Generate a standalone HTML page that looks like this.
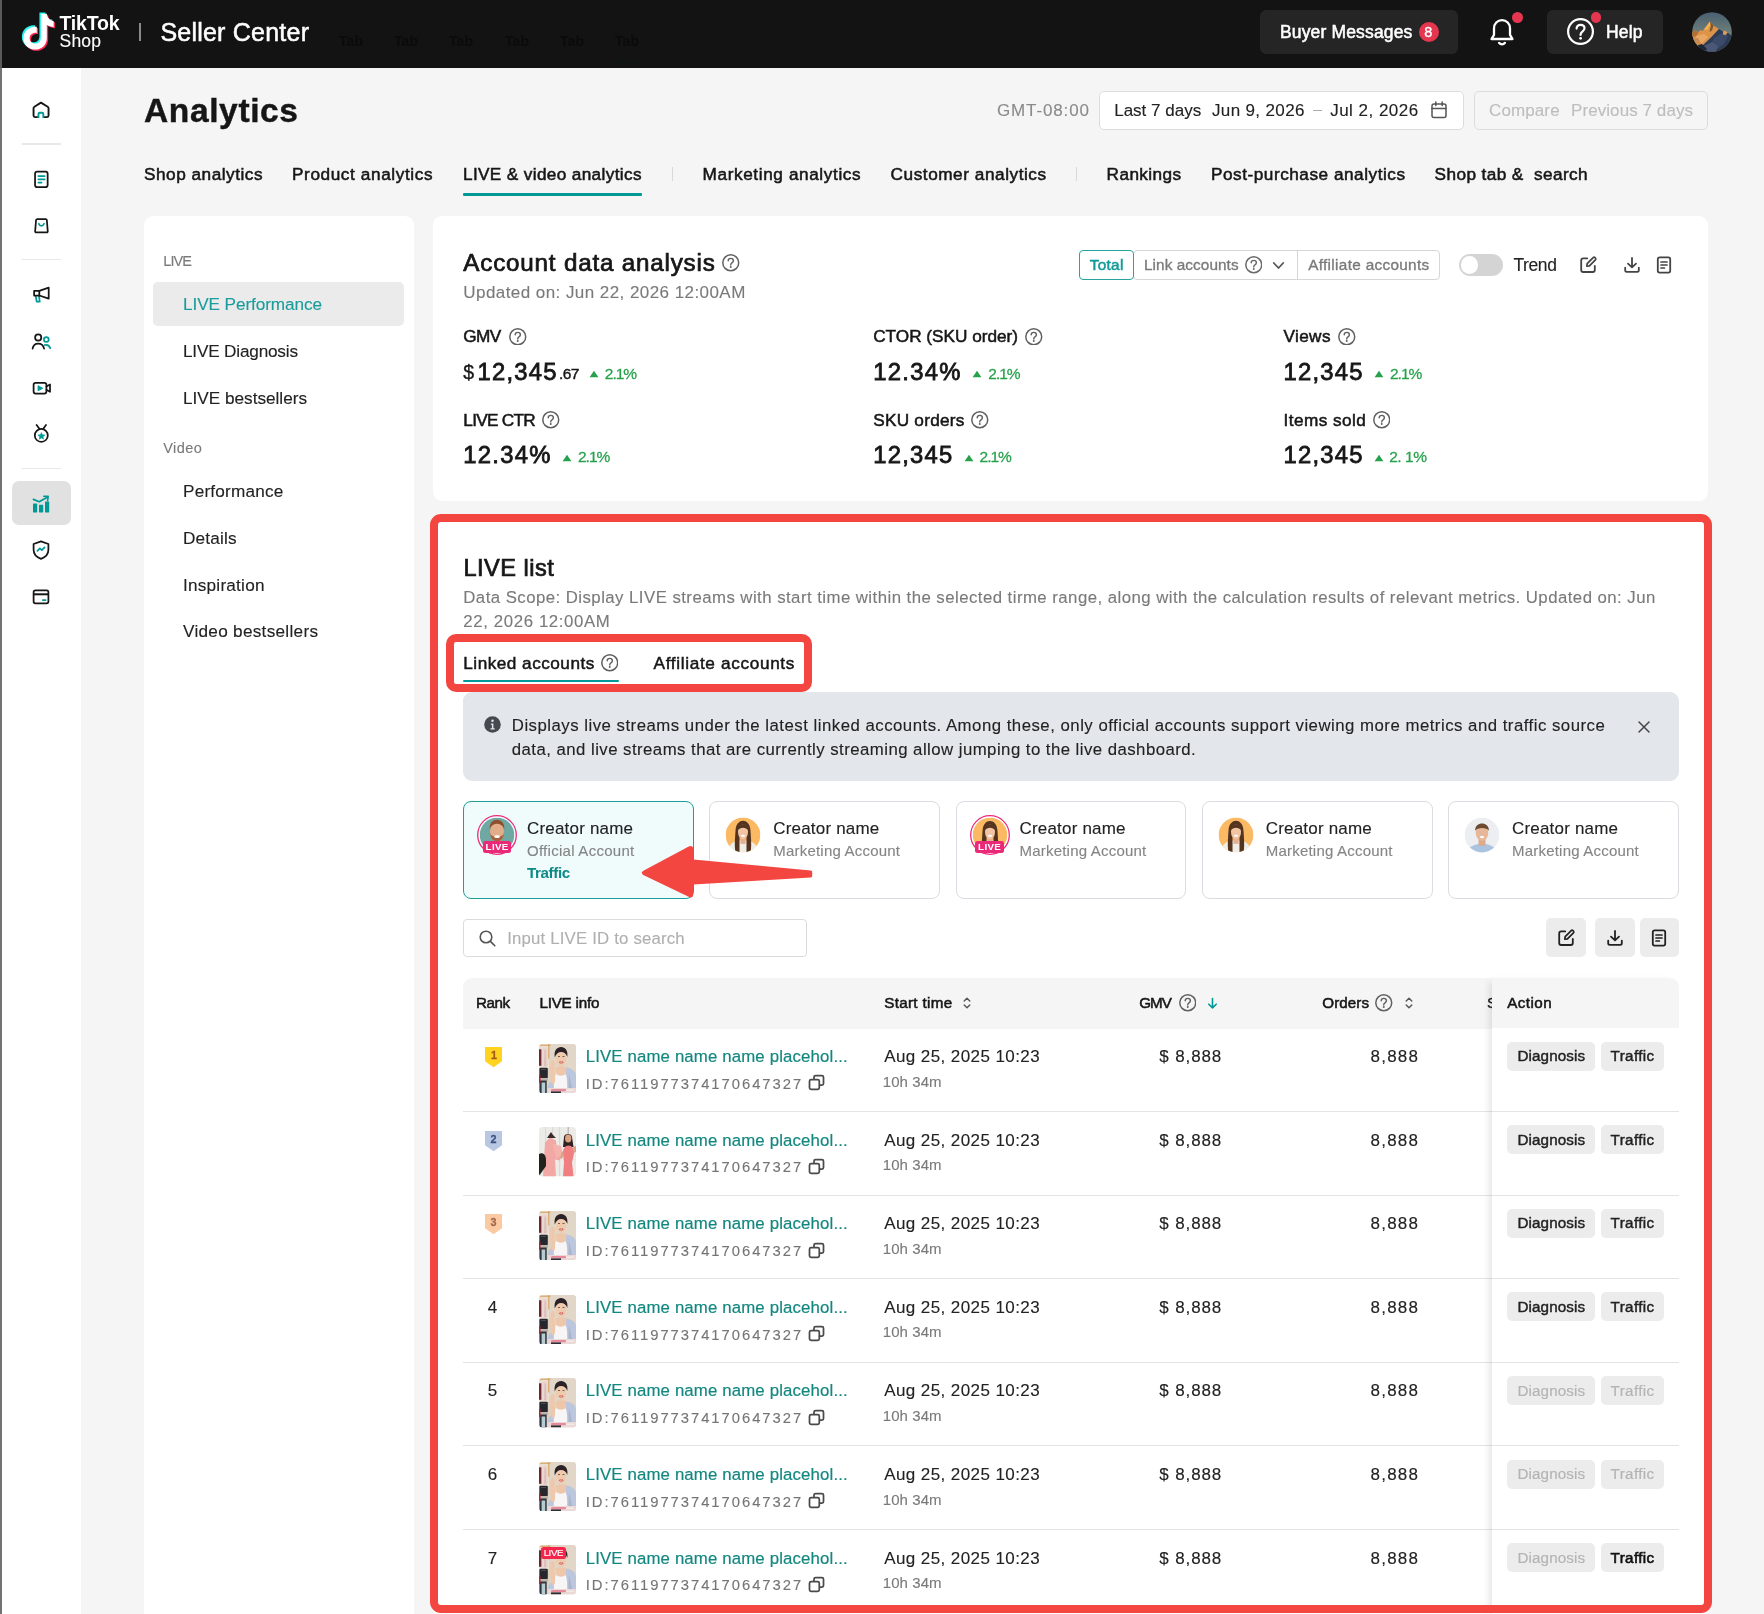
<!DOCTYPE html>
<html><head><meta charset="utf-8"><title>Analytics - Seller Center</title>
<style>
html,body{margin:0;padding:0;}
body{width:1764px;height:1614px;overflow:hidden;background:#f5f5f5;font-family:"Liberation Sans",sans-serif;position:relative;}
#root{position:absolute;left:0;top:0;width:1764px;height:1614px;will-change:transform;}
.a{position:absolute;box-sizing:border-box;display:block;}
.t{position:absolute;white-space:nowrap;line-height:1;}
</style></head>
<body>
<div id="root">
<div class="a" style="left:0px;top:0px;width:1764px;height:68px;background:#131313;"></div>
<svg class="a" style="left:16.6px;top:11.4px;" width="42.5" height="46.75" viewBox="0 0 40 44" fill="none"><path d="M22.5 2.5h5.6c.3 3.6 2.6 6.3 6.4 6.8v5.7c-2.4 0-4.6-.7-6.4-2v12.3c0 6.4-5 11-11 11S6 31.8 6 25.6c0-6.7 5.600-11.6 12.600-10.800v5.900c-3.600-.800-6.700 1.500-6.700 4.900 0 2.900 2.300 5.100 5.200 5.100s5.400-2.200 5.400-5.600z" fill="#25f4ee" transform="translate(-1.4,-1.2)"/><path d="M22.5 2.5h5.6c.3 3.6 2.6 6.3 6.4 6.8v5.7c-2.4 0-4.6-.7-6.4-2v12.3c0 6.4-5 11-11 11S6 31.8 6 25.6c0-6.7 5.600-11.6 12.600-10.800v5.900c-3.600-.800-6.700 1.500-6.700 4.900 0 2.900 2.300 5.100 5.200 5.100s5.400-2.200 5.400-5.600z" fill="#fe2c55" transform="translate(1.2,1.2)"/><path d="M22.5 2.5h5.6c.3 3.6 2.6 6.3 6.4 6.8v5.7c-2.4 0-4.6-.7-6.4-2v12.3c0 6.4-5 11-11 11S6 31.8 6 25.6c0-6.7 5.600-11.6 12.600-10.800v5.900c-3.600-.800-6.700 1.500-6.700 4.900 0 2.900 2.300 5.100 5.200 5.100s5.400-2.200 5.400-5.600z" fill="#fff"/></svg>
<span class="t" style="left:59.5px;top:14px;font-size:19.5px;color:#fff;font-weight:700;letter-spacing:-0.209px;">TikTok</span>
<span class="t" style="left:59.5px;top:33px;font-size:17.5px;color:#fff;-webkit-text-stroke:0.12px #fff;letter-spacing:0.208px;">Shop</span>
<div class="a" style="left:139px;top:23px;width:1.5px;height:18px;background:#8a8a8a;"></div>
<span class="t" style="left:160.4px;top:20px;font-size:25px;color:#fff;-webkit-text-stroke:0.53px #fff;letter-spacing:0.224px;">Seller Center</span>
<span class="t" style="left:339px;top:34px;font-size:14px;color:#0b0b0b;font-weight:700;letter-spacing:0.070px;">Tab</span>
<span class="t" style="left:394px;top:34px;font-size:14px;color:#0b0b0b;font-weight:700;letter-spacing:0.070px;">Tab</span>
<span class="t" style="left:449px;top:34px;font-size:14px;color:#0b0b0b;font-weight:700;letter-spacing:0.070px;">Tab</span>
<span class="t" style="left:505px;top:34px;font-size:14px;color:#0b0b0b;font-weight:700;letter-spacing:0.070px;">Tab</span>
<span class="t" style="left:560px;top:34px;font-size:14px;color:#0b0b0b;font-weight:700;letter-spacing:0.070px;">Tab</span>
<span class="t" style="left:615px;top:34px;font-size:14px;color:#0b0b0b;font-weight:700;letter-spacing:0.070px;">Tab</span>
<div class="a" style="left:615px;top:61px;width:24px;height:2px;background:#0e1615;"></div>
<div class="a" style="left:1260px;top:9.5px;width:198px;height:44px;background:#252525;border-radius:6px;"></div>
<span class="t" style="left:1280px;top:24px;font-size:17.5px;color:#fff;-webkit-text-stroke:0.53px #fff;letter-spacing:0.150px;">Buyer Messages</span>
<div class="a" style="left:1418.5px;top:21.5px;width:20px;height:20px;background:#e5364f;border-radius:10px;"></div>
<span class="t" style="left:1424.2px;top:25px;font-size:14.5px;color:#fff;-webkit-text-stroke:0.35px #fff;">8</span>
<svg class="a" style="left:1488px;top:17px;" width="28" height="30" viewBox="0 0 28 30" fill="none"><path d="M14 3.2c-4.600 0-8 3.600-8 8.200v6.400l-2.500 4.200h21L22 17.800v-6.400c0-4.600-3.400-8.200-8-8.200z" stroke="#fff" stroke-width="2.300" stroke-linejoin="round"/><path d="M11 25.800c.8 1 1.800 1.500 3 1.500s2.200-.5 3-1.500" stroke="#fff" stroke-width="2.200" stroke-linecap="round"/></svg>
<div class="a" style="left:1512px;top:12px;width:10.5px;height:10.5px;background:#e5364f;border-radius:6px;"></div>
<div class="a" style="left:1546.5px;top:9.5px;width:116.5px;height:44px;background:#252525;border-radius:6px;"></div>
<svg class="a" style="left:1566px;top:17px;" width="29" height="29" viewBox="0 0 29 29" fill="none"><circle cx="14.5" cy="14.5" r="12.4" stroke="#fff" stroke-width="2.200"/><path d="M10.600 11.600c0-2.200 1.700-3.800 4-3.800s3.900 1.500 3.900 3.500c0 1.700-1 2.500-2.100 3.300-1.100.8-1.800 1.400-1.800 2.800v.5" stroke="#fff" stroke-width="2.200" stroke-linecap="round"/><circle cx="14.600" cy="21.300" r="1.400" fill="#fff"/></svg>
<div class="a" style="left:1590.5px;top:12px;width:10.5px;height:10.5px;background:#e5364f;border-radius:6px;"></div>
<span class="t" style="left:1606px;top:24px;font-size:17.5px;color:#fff;-webkit-text-stroke:0.53px #fff;letter-spacing:0.167px;">Help</span>
<svg class="a" style="left:1692.4px;top:11.600px" width="40" height="40" viewBox="0 0 40 40"><defs><clipPath id="avc"><circle cx="20" cy="20" r="19.800"/></clipPath><linearGradient id="sky" x1="0" y1="0" x2="0" y2="1"><stop offset="0" stop-color="#495f70"/><stop offset=".55" stop-color="#6f8079"/><stop offset="1" stop-color="#6f8079"/></linearGradient></defs><g clip-path="url(#avc)"><rect width="40" height="40" fill="url(#sky)"/><path d="M18 9.400L10.500 19 8.500 18 6.500 20 2.500 18.500 0 21V33L9 35 19 25.500 27 17 21.500 13.500z" fill="#dd9449"/><path d="M18 9.400L12 17.500 15 18 18.500 13z" fill="#f3b34d"/><path d="M18 9.400L21.500 13.500 20 18.500 17.500 20 18.800 14z" fill="#7d5630"/><path d="M0 21l2.500-2.500 4 1.500-2 4-4.500 1z" fill="#b06f35"/><path d="M4 24l8-2 4 3-6 6-6-1z" fill="#e9a763"/><path d="M0 26l6 0 3 5-9 2z" fill="#c98a55"/><path d="M27 17l3 2 2.500 1.200 3.500.800 4 3V40H6l3-5 10-9.500z" fill="#2e3b55"/><path d="M22 26l8-5 6 3-4 8-8 6-8 1z" fill="#3b4a68"/><path d="M12 34l8-4 6 4-2 6H10z" fill="#4a5876"/><path d="M31 19.500l2-1 2.500 2-1.500 2.500-3-.500z" fill="#d99a5a"/><path d="M6 33l4-1 5 5-3 3H5z" fill="#1d2435"/></g></svg>
<div class="a" style="left:2px;top:68px;width:79px;height:1546px;background:#fff;"></div>
<div class="a" style="left:0px;top:0px;width:2.3px;height:68px;background:#5a5a5a;"></div>
<div class="a" style="left:0px;top:68px;width:2.3px;height:1546px;background:#727272;"></div>
<svg class="a" style="left:30.0px;top:99.3px;" width="22" height="22" viewBox="0 0 22 22" fill="none"><path d="M8.450 18.100H5.050c-.850 0-1.500-.650-1.500-1.500V9.300c0-.700.300-1.200.900-1.600L10.950 3.600l6.700 4.100c.600.400.900.900.900 1.600v7.300c0 .850-.650 1.500-1.500 1.500h-3.700" stroke="#161616" stroke-width="1.900" stroke-linejoin="round"/><path d="M8.450 19.050v-3.900c0-.800.650-1.450 1.450-1.450h2c.800 0 1.450.650 1.450 1.450v3.900" stroke="#009995" stroke-width="1.900" stroke-linecap="butt"/></svg>
<div class="a" style="left:22px;top:143px;width:39px;height:1.5px;background:#e6e8ec;"></div>
<svg class="a" style="left:30.0px;top:168.3px;" width="22" height="22" viewBox="0 0 22 22" fill="none"><rect x="5.050" y="3.550" width="12.600" height="15.600" rx="2.200" stroke="#161616" stroke-width="1.75" stroke-linecap="round" stroke-linejoin="round"/><path d="M8.400 8.100h6.300M8.400 11.300h6.300M8.400 14.600h3.200" stroke="#009995" stroke-width="1.75" stroke-linecap="round" stroke-linejoin="round"/></svg>
<svg class="a" style="left:30.0px;top:214.6px;" width="22" height="22" viewBox="0 0 22 22" fill="none"><path d="M7.350 4.200h8.400c.600 0 1 .400 1.100 1l.900 11.100c.050.600-.400 1.100-1 1.100H6.150c-.600 0-1.050-.500-1-1.100l.900-11.100c.100-.600.600-1 1.300-1z" stroke="#161616" stroke-width="1.75" stroke-linecap="round" stroke-linejoin="round"/><path d="M8.800 8.700c.500 1.400 1.400 2.100 2.600 2.100s2.100-.700 2.600-2.100" stroke="#009995" stroke-width="1.75" stroke-linecap="round" stroke-linejoin="round"/></svg>
<div class="a" style="left:22px;top:258.5px;width:39px;height:1.5px;background:#e6e8ec;"></div>
<svg class="a" style="left:30.0px;top:283.5px;" width="22" height="22" viewBox="0 0 22 22" fill="none"><path d="M5.800 12.500l.900 5.200h3l-.600-5.200" stroke="#009995" stroke-width="1.75" stroke-linecap="round" stroke-linejoin="round"/><path d="M4.100 6.900h5.200L18.700 3.600v11L9.300 11.500H4.100z" stroke="#161616" stroke-width="1.75" stroke-linecap="round" stroke-linejoin="round"/><path d="M9.300 6.900v4.600" stroke="#161616" stroke-width="1.75" stroke-linecap="round" stroke-linejoin="round"/></svg>
<svg class="a" style="left:30.0px;top:330.0px;" width="22" height="22" viewBox="0 0 22 22" fill="none"><circle cx="8.200" cy="7.400" r="3.100" stroke="#161616" stroke-width="1.75" stroke-linecap="round" stroke-linejoin="round"/><path d="M2.600 18.600c.600-3.400 2.800-5 5.600-5s5.200 1.600 5.900 5" stroke="#161616" stroke-width="1.75" stroke-linecap="round" stroke-linejoin="round"/><circle cx="16.300" cy="9.400" r="2.400" stroke="#009995" stroke-width="1.75" stroke-linecap="round" stroke-linejoin="round"/><path d="M14.600 15c2.800-.500 4.900.800 5.600 3.200" stroke="#009995" stroke-width="1.75" stroke-linecap="round" stroke-linejoin="round"/></svg>
<svg class="a" style="left:30.5px;top:376.5px;" width="22" height="22" viewBox="0 0 22 22" fill="none"><rect x="2.600" y="5.800" width="12.800" height="10.700" rx="2" stroke="#161616" stroke-width="1.75" stroke-linecap="round" stroke-linejoin="round"/><path d="M15.400 9.500l3.600-2v7.300l-3.600-2" stroke="#161616" stroke-width="1.75" stroke-linecap="round" stroke-linejoin="round"/><path d="M7 8.700l4.800 2.550-4.800 2.550z" fill="#009995" stroke="#009995" stroke-width=".8" stroke-linejoin="round"/></svg>
<svg class="a" style="left:30.0px;top:423.3px;" width="22" height="22" viewBox="0 0 22 22" fill="none"><circle cx="11.300" cy="12.400" r="6.500" stroke="#161616" stroke-width="1.75" stroke-linecap="round" stroke-linejoin="round"/><path d="M6.600 1.900l3 4M16 1.900l-2.900 4" stroke="#161616" stroke-width="1.75" stroke-linecap="round" stroke-linejoin="round"/><path d="M11.40 9.50L12.43 11.78L14.92 12.06L13.06 13.74L13.57 16.19L11.40 14.95L9.23 16.19L9.74 13.74L7.88 12.06L10.37 11.78z" fill="#009995" stroke="#009995" stroke-width=".5" stroke-linejoin="round"/></svg>
<div class="a" style="left:22px;top:467.5px;width:39px;height:1.5px;background:#e6e8ec;"></div>
<div class="a" style="left:12px;top:481px;width:59px;height:44px;background:#e1e1e2;border-radius:7px;"></div>
<svg class="a" style="left:30.0px;top:492.5px;" width="22" height="22" viewBox="0 0 22 22" fill="none"><rect x="3" y="10.600" width="4.200" height="8.800" rx=".6" fill="#009995"/><rect x="9" y="11.800" width="4.200" height="7.600" rx=".6" fill="#009995"/><rect x="15" y="8.600" width="4.200" height="10.800" rx=".6" fill="#009995"/><path d="M3.400 6.400l5.800 2.400 8-4.600" stroke="#009995" stroke-width="1.700" stroke-linecap="round" stroke-linejoin="round"/><path d="M13.800 3.200l4.400.2-.6 4.200" stroke="#009995" stroke-width="1.600" stroke-linecap="round" stroke-linejoin="round"/></svg>
<svg class="a" style="left:30.0px;top:539.2px;" width="22" height="22" viewBox="0 0 22 22" fill="none"><path d="M11 2.400l7.400 2.600v5.800c0 4.400-2.800 7.400-7.400 9-4.600-1.600-7.400-4.600-7.400-9V5z" stroke="#161616" stroke-width="1.75" stroke-linecap="round" stroke-linejoin="round"/><path d="M7.400 11.800l2.400-2.400 2 1.800 2.800-2.800" stroke="#009995" stroke-width="1.75" stroke-linecap="round" stroke-linejoin="round"/></svg>
<svg class="a" style="left:30.0px;top:586.0px;" width="22" height="22" viewBox="0 0 22 22" fill="none"><rect x="3.600" y="4.400" width="14.800" height="13" rx="1.800" stroke="#161616" stroke-width="1.75" stroke-linecap="round" stroke-linejoin="round"/><path d="M3.600 8.300h14.800" stroke="#161616" stroke-width="2"/><path d="M12.800 14.100h2.800" stroke="#009995" stroke-width="1.75" stroke-linecap="round" stroke-linejoin="round"/></svg>
<span class="t" style="left:144px;top:94px;font-size:33.5px;color:#161616;font-weight:700;-webkit-text-stroke:0.44px #161616;letter-spacing:0.631px;">Analytics</span>
<span class="t" style="left:997px;top:102px;font-size:17px;color:#8a8a8a;-webkit-text-stroke:0.12px #8a8a8a;letter-spacing:0.869px;">GMT-08:00</span>
<div class="a" style="left:1099px;top:90.5px;width:364.5px;height:39px;background:#fff;border:1.5px solid #dcdcdc;border-radius:5px;"></div>
<span class="t" style="left:1114.2px;top:102px;font-size:17px;color:#222;-webkit-text-stroke:0.12px #222;letter-spacing:0.005px;">Last 7 days</span>
<span class="t" style="left:1212px;top:102px;font-size:17px;color:#222;-webkit-text-stroke:0.12px #222;letter-spacing:0.354px;">Jun 9, 2026</span>
<div class="a" style="left:1313px;top:110px;width:9px;height:1.3px;background:#aaa;"></div>
<span class="t" style="left:1330.2px;top:102px;font-size:17px;color:#222;-webkit-text-stroke:0.12px #222;letter-spacing:0.481px;">Jul 2, 2026</span>
<svg class="a" style="left:1430px;top:100px;" width="18" height="20" viewBox="0 0 18 20" fill="none"><rect x="2" y="4" width="14" height="13.600" rx="2" stroke="#555" stroke-width="1.500"/><path d="M2 8.600h14M5.800 2v3.600M12.200 2v3.600" stroke="#555" stroke-width="1.500" stroke-linecap="round"/></svg>
<div class="a" style="left:1474px;top:90.5px;width:234px;height:39px;background:#f5f5f5;border:1.5px solid #dcdcdc;border-radius:5px;"></div>
<span class="t" style="left:1489px;top:102px;font-size:17px;color:#bdbdbd;-webkit-text-stroke:0.12px #bdbdbd;letter-spacing:0.113px;">Compare</span>
<span class="t" style="left:1571px;top:102px;font-size:17px;color:#bdbdbd;-webkit-text-stroke:0.12px #bdbdbd;letter-spacing:0.075px;">Previous 7 days</span>
<span class="t" style="left:144px;top:166px;font-size:17.2px;color:#161616;-webkit-text-stroke:0.53px #161616;letter-spacing:0.516px;white-space:pre;">Shop analytics</span>
<span class="t" style="left:292px;top:166px;font-size:17.2px;color:#161616;-webkit-text-stroke:0.53px #161616;letter-spacing:0.601px;white-space:pre;">Product analytics</span>
<span class="t" style="left:463px;top:166px;font-size:17.2px;color:#161616;-webkit-text-stroke:0.53px #161616;letter-spacing:0.356px;white-space:pre;">LIVE &amp; video analytics</span>
<span class="t" style="left:702.6px;top:166px;font-size:17.2px;color:#161616;-webkit-text-stroke:0.53px #161616;letter-spacing:0.605px;white-space:pre;">Marketing analytics</span>
<span class="t" style="left:890.6px;top:166px;font-size:17.2px;color:#161616;-webkit-text-stroke:0.53px #161616;letter-spacing:0.550px;white-space:pre;">Customer analytics</span>
<span class="t" style="left:1106.6px;top:166px;font-size:17.2px;color:#161616;-webkit-text-stroke:0.53px #161616;letter-spacing:0.406px;white-space:pre;">Rankings</span>
<span class="t" style="left:1211px;top:166px;font-size:17.2px;color:#161616;-webkit-text-stroke:0.53px #161616;letter-spacing:0.524px;white-space:pre;">Post-purchase analytics</span>
<span class="t" style="left:1434.6px;top:166px;font-size:17.2px;color:#161616;-webkit-text-stroke:0.53px #161616;letter-spacing:0.401px;white-space:pre;">Shop tab &amp;  search</span>
<div class="a" style="left:463px;top:193px;width:179px;height:3px;background:#009995;border-radius:1px;"></div>
<div class="a" style="left:671.5px;top:167px;width:1.3px;height:14px;background:#d9d9d9;"></div>
<div class="a" style="left:1076px;top:167px;width:1.3px;height:14px;background:#d9d9d9;"></div>
<div class="a" style="left:143.5px;top:215.5px;width:270px;height:1410px;background:#fff;border-radius:9px;"></div>
<span class="t" style="left:163.3px;top:254px;font-size:14.5px;color:#7a7a7a;-webkit-text-stroke:0.12px #7a7a7a;letter-spacing:-0.946px;">LIVE</span>
<div class="a" style="left:153px;top:282px;width:250.5px;height:44px;background:#ebebeb;border-radius:5px;"></div>
<span class="t" style="left:183px;top:296px;font-size:17.2px;color:#1a9c9c;-webkit-text-stroke:0.12px #1a9c9c;letter-spacing:-0.096px;">LIVE Performance</span>
<span class="t" style="left:183px;top:343px;font-size:17.2px;color:#222;-webkit-text-stroke:0.12px #222;letter-spacing:-0.194px;">LIVE Diagnosis</span>
<span class="t" style="left:183px;top:390px;font-size:17.2px;color:#222;-webkit-text-stroke:0.12px #222;letter-spacing:-0.014px;">LIVE bestsellers</span>
<span class="t" style="left:163.3px;top:441px;font-size:14.5px;color:#7a7a7a;-webkit-text-stroke:0.12px #7a7a7a;letter-spacing:0.418px;">Video</span>
<span class="t" style="left:183px;top:483px;font-size:17.2px;color:#222;-webkit-text-stroke:0.12px #222;letter-spacing:0.189px;">Performance</span>
<span class="t" style="left:183px;top:530px;font-size:17.2px;color:#222;-webkit-text-stroke:0.12px #222;letter-spacing:0.159px;">Details</span>
<span class="t" style="left:183px;top:577px;font-size:17.2px;color:#222;-webkit-text-stroke:0.12px #222;letter-spacing:0.219px;">Inspiration</span>
<span class="t" style="left:183px;top:623px;font-size:17.2px;color:#222;-webkit-text-stroke:0.12px #222;letter-spacing:0.276px;">Video bestsellers</span>
<div class="a" style="left:433px;top:215.5px;width:1275.3px;height:285px;background:#fff;border-radius:9px;"></div>
<span class="t" style="left:463.3px;top:251px;font-size:24.2px;color:#161616;-webkit-text-stroke:0.73px #161616;letter-spacing:0.810px;">Account data analysis</span>
<svg class="a" style="left:722.05px;top:254.05px;" width="17.5" height="17.5" viewBox="0 0 20 20" fill="none"><circle cx="10" cy="10" r="9.1" stroke="#606060" stroke-width="1.7"/><path d="M7.1 7.8c0-1.6 1.3-2.8 3-2.8s2.9 1.100 2.900 2.600c0 1.300-.7 1.900-1.600 2.500-.9.600-1.400 1.100-1.400 2.100v.300" stroke="#606060" stroke-width="1.65" stroke-linecap="round"/><circle cx="10" cy="14.900" r="1.150" fill="#606060"/></svg>
<span class="t" style="left:463.3px;top:284px;font-size:17px;color:#7a7a7a;-webkit-text-stroke:0.12px #7a7a7a;letter-spacing:0.438px;">Updated on: Jun 22, 2026 12:00AM</span>
<span class="t" style="left:463.3px;top:328px;font-size:17.2px;color:#161616;-webkit-text-stroke:0.53px #161616;letter-spacing:-0.578px;">GMV</span>
<svg class="a" style="left:509.35px;top:327.84999999999997px;" width="17.5" height="17.5" viewBox="0 0 20 20" fill="none"><circle cx="10" cy="10" r="9.1" stroke="#606060" stroke-width="1.7"/><path d="M7.1 7.8c0-1.6 1.3-2.8 3-2.8s2.9 1.100 2.900 2.600c0 1.300-.7 1.900-1.600 2.500-.9.600-1.400 1.100-1.400 2.100v.300" stroke="#606060" stroke-width="1.65" stroke-linecap="round"/><circle cx="10" cy="14.900" r="1.150" fill="#606060"/></svg>
<span class="t" style="left:463.3px;top:363px;font-size:19.5px;color:#161616;-webkit-text-stroke:0.35px #161616;">$</span>
<span class="t" style="left:477.5px;top:360px;font-size:23.8px;color:#161616;-webkit-text-stroke:0.81px #161616;letter-spacing:1.241px;">12,345</span>
<span class="t" style="left:559px;top:366px;font-size:15.5px;color:#161616;-webkit-text-stroke:0.44px #161616;letter-spacing:-0.631px;">.67</span>
<svg class="a" style="left:589.3px;top:370.4px;" width="10" height="8" viewBox="0 0 10 8" fill="none"><path d="M5 .8L9.400 7.200H.6z" fill="#27a14b"/></svg>
<span class="t" style="left:604.8px;top:366px;font-size:15.5px;color:#27a14b;-webkit-text-stroke:0.26px #27a14b;letter-spacing:-1.015px;">2.1%</span>
<span class="t" style="left:463.3px;top:412px;font-size:17.2px;color:#161616;-webkit-text-stroke:0.53px #161616;letter-spacing:-0.725px;">LIVE CTR</span>
<svg class="a" style="left:542.05px;top:411.45px;" width="17.5" height="17.5" viewBox="0 0 20 20" fill="none"><circle cx="10" cy="10" r="9.1" stroke="#606060" stroke-width="1.7"/><path d="M7.1 7.8c0-1.6 1.3-2.8 3-2.8s2.9 1.100 2.900 2.600c0 1.300-.7 1.900-1.600 2.500-.9.600-1.400 1.100-1.400 2.100v.300" stroke="#606060" stroke-width="1.65" stroke-linecap="round"/><circle cx="10" cy="14.900" r="1.150" fill="#606060"/></svg>
<span class="t" style="left:463.3px;top:443px;font-size:23.8px;color:#161616;-webkit-text-stroke:0.81px #161616;letter-spacing:1.296px;">12.34%</span>
<svg class="a" style="left:562.2px;top:454.0px;" width="10" height="8" viewBox="0 0 10 8" fill="none"><path d="M5 .8L9.400 7.200H.6z" fill="#27a14b"/></svg>
<span class="t" style="left:578px;top:449px;font-size:15.5px;color:#27a14b;-webkit-text-stroke:0.26px #27a14b;letter-spacing:-1.015px;">2.1%</span>
<span class="t" style="left:873.2px;top:328px;font-size:17.2px;color:#161616;-webkit-text-stroke:0.53px #161616;letter-spacing:-0.003px;">CTOR (SKU order)</span>
<svg class="a" style="left:1025.25px;top:327.84999999999997px;" width="17.5" height="17.5" viewBox="0 0 20 20" fill="none"><circle cx="10" cy="10" r="9.1" stroke="#606060" stroke-width="1.7"/><path d="M7.1 7.8c0-1.6 1.3-2.8 3-2.8s2.9 1.100 2.900 2.600c0 1.300-.7 1.900-1.600 2.500-.9.600-1.400 1.100-1.400 2.100v.300" stroke="#606060" stroke-width="1.65" stroke-linecap="round"/><circle cx="10" cy="14.900" r="1.150" fill="#606060"/></svg>
<span class="t" style="left:873.2px;top:360px;font-size:23.8px;color:#161616;-webkit-text-stroke:0.81px #161616;letter-spacing:1.296px;">12.34%</span>
<svg class="a" style="left:972.3px;top:370.4px;" width="10" height="8" viewBox="0 0 10 8" fill="none"><path d="M5 .8L9.400 7.200H.6z" fill="#27a14b"/></svg>
<span class="t" style="left:988.3px;top:366px;font-size:15.5px;color:#27a14b;-webkit-text-stroke:0.26px #27a14b;letter-spacing:-1.015px;">2.1%</span>
<span class="t" style="left:873.2px;top:412px;font-size:17.2px;color:#161616;-webkit-text-stroke:0.53px #161616;letter-spacing:0.262px;">SKU orders</span>
<svg class="a" style="left:971.05px;top:411.45px;" width="17.5" height="17.5" viewBox="0 0 20 20" fill="none"><circle cx="10" cy="10" r="9.1" stroke="#606060" stroke-width="1.7"/><path d="M7.1 7.8c0-1.6 1.3-2.8 3-2.8s2.9 1.100 2.900 2.600c0 1.300-.7 1.900-1.600 2.500-.9.600-1.400 1.100-1.400 2.100v.300" stroke="#606060" stroke-width="1.65" stroke-linecap="round"/><circle cx="10" cy="14.900" r="1.150" fill="#606060"/></svg>
<span class="t" style="left:873.2px;top:443px;font-size:23.8px;color:#161616;-webkit-text-stroke:0.81px #161616;letter-spacing:1.241px;">12,345</span>
<svg class="a" style="left:963.7px;top:454.0px;" width="10" height="8" viewBox="0 0 10 8" fill="none"><path d="M5 .8L9.400 7.200H.6z" fill="#27a14b"/></svg>
<span class="t" style="left:979.6px;top:449px;font-size:15.5px;color:#27a14b;-webkit-text-stroke:0.26px #27a14b;letter-spacing:-1.015px;">2.1%</span>
<span class="t" style="left:1283.5px;top:328px;font-size:17.2px;color:#161616;-webkit-text-stroke:0.53px #161616;letter-spacing:0.363px;">Views</span>
<svg class="a" style="left:1338.35px;top:327.84999999999997px;" width="17.5" height="17.5" viewBox="0 0 20 20" fill="none"><circle cx="10" cy="10" r="9.1" stroke="#606060" stroke-width="1.7"/><path d="M7.1 7.8c0-1.6 1.3-2.8 3-2.8s2.9 1.100 2.900 2.600c0 1.300-.7 1.900-1.600 2.500-.9.600-1.400 1.100-1.400 2.100v.300" stroke="#606060" stroke-width="1.65" stroke-linecap="round"/><circle cx="10" cy="14.900" r="1.150" fill="#606060"/></svg>
<span class="t" style="left:1283.5px;top:360px;font-size:23.8px;color:#161616;-webkit-text-stroke:0.81px #161616;letter-spacing:1.241px;">12,345</span>
<svg class="a" style="left:1374px;top:370.4px;" width="10" height="8" viewBox="0 0 10 8" fill="none"><path d="M5 .8L9.400 7.200H.6z" fill="#27a14b"/></svg>
<span class="t" style="left:1390px;top:366px;font-size:15.5px;color:#27a14b;-webkit-text-stroke:0.26px #27a14b;letter-spacing:-1.015px;">2.1%</span>
<span class="t" style="left:1283.5px;top:412px;font-size:17.2px;color:#161616;-webkit-text-stroke:0.53px #161616;letter-spacing:0.430px;">Items sold</span>
<svg class="a" style="left:1372.75px;top:411.45px;" width="17.5" height="17.5" viewBox="0 0 20 20" fill="none"><circle cx="10" cy="10" r="9.1" stroke="#606060" stroke-width="1.7"/><path d="M7.1 7.8c0-1.6 1.3-2.8 3-2.8s2.9 1.100 2.900 2.600c0 1.300-.7 1.900-1.600 2.500-.9.600-1.400 1.100-1.400 2.100v.300" stroke="#606060" stroke-width="1.65" stroke-linecap="round"/><circle cx="10" cy="14.900" r="1.150" fill="#606060"/></svg>
<span class="t" style="left:1283.5px;top:443px;font-size:23.8px;color:#161616;-webkit-text-stroke:0.81px #161616;letter-spacing:1.241px;">12,345</span>
<svg class="a" style="left:1374px;top:454.0px;" width="10" height="8" viewBox="0 0 10 8" fill="none"><path d="M5 .8L9.400 7.200H.6z" fill="#27a14b"/></svg>
<span class="t" style="left:1389.2px;top:449px;font-size:15.5px;color:#27a14b;-webkit-text-stroke:0.26px #27a14b;letter-spacing:-0.460px;">2. 1%</span>
<div class="a" style="left:1133px;top:250.2px;width:306.5px;height:29.6px;background:#fff;border:1.3px solid #d6d6d6;border-radius:4px;"></div>
<div class="a" style="left:1297.2px;top:250.2px;width:1.3px;height:29.6px;background:#d6d6d6;"></div>
<div class="a" style="left:1079px;top:250.2px;width:55px;height:29.6px;background:#fff;border:1.600px solid #2aa3a0;border-radius:4px;"></div>
<span class="t" style="left:1089.7px;top:257px;font-size:15.3px;color:#139a97;-webkit-text-stroke:0.53px #139a97;letter-spacing:0.322px;">Total</span>
<span class="t" style="left:1144px;top:257px;font-size:15.3px;color:#7a7a7a;-webkit-text-stroke:0.35px #7a7a7a;letter-spacing:0.088px;">Link accounts</span>
<svg class="a" style="left:1244.85px;top:256.05px;" width="17.5" height="17.5" viewBox="0 0 20 20" fill="none"><circle cx="10" cy="10" r="9.1" stroke="#6a6a6a" stroke-width="1.7"/><path d="M7.1 7.8c0-1.6 1.3-2.8 3-2.8s2.9 1.100 2.900 2.600c0 1.300-.7 1.900-1.600 2.500-.9.600-1.400 1.100-1.400 2.100v.300" stroke="#6a6a6a" stroke-width="1.65" stroke-linecap="round"/><circle cx="10" cy="14.900" r="1.150" fill="#6a6a6a"/></svg>
<svg class="a" style="left:1272px;top:259.5px;" width="13" height="11" viewBox="0 0 13 11" fill="none"><path d="M1.800 3l4.700 5 4.700-5" stroke="#555" stroke-width="1.800" stroke-linecap="round" stroke-linejoin="round"/></svg>
<span class="t" style="left:1308.2px;top:257px;font-size:15.3px;color:#7a7a7a;-webkit-text-stroke:0.35px #7a7a7a;letter-spacing:0.331px;">Affiliate accounts</span>
<div class="a" style="left:1458.8px;top:254.3px;width:43.8px;height:21.6px;background:#d4d4d4;border-radius:11px;"></div>
<div class="a" style="left:1460.8px;top:256.3px;width:17.6px;height:17.6px;background:#fff;border-radius:9px;"></div>
<span class="t" style="left:1513.4px;top:257px;font-size:17.5px;color:#222;-webkit-text-stroke:0.12px #222;letter-spacing:-0.395px;">Trend</span>
<svg class="a" style="left:1578px;top:254.5px;" width="20" height="20" viewBox="0 0 20 20" fill="none"><path d="M9.200 3.400H5.200c-1.200 0-2 .8-2 2v9.600c0 1.200.8 2 2 2h9.600c1.200 0 2-.8 2-2v-4.200" stroke="#444" stroke-width="1.800" stroke-linecap="round"/><path d="M8.800 11.200l.4-2.600 6-6c.5-.5 1.300-.5 1.800 0l.400.400c.5.5.5 1.300 0 1.800l-6 6z" stroke="#444" stroke-width="1.700" stroke-linejoin="round"/></svg>
<svg class="a" style="left:1622px;top:254.5px;" width="20" height="20" viewBox="0 0 20 20" fill="none"><path d="M10 3v9.200M6 8.600l4 3.800 4-3.800" stroke="#444" stroke-width="1.800" stroke-linecap="round" stroke-linejoin="round"/><path d="M3.200 12.600v2.600c0 .9.700 1.600 1.600 1.600h10.400c.9 0 1.600-.7 1.600-1.600v-2.600" stroke="#444" stroke-width="1.800" stroke-linecap="round"/></svg>
<svg class="a" style="left:1654px;top:254.5px;" width="20" height="20" viewBox="0 0 20 20" fill="none"><rect x="3.800" y="2.400" width="12.400" height="15.200" rx="1.800" stroke="#444" stroke-width="1.800"/><path d="M7 7h6M7 10h6M7 13h3.400" stroke="#444" stroke-width="1.700" stroke-linecap="round"/></svg>
<div class="a" style="left:433px;top:516px;width:1275.3px;height:1110px;background:#fff;border-radius:9px;"></div>
<span class="t" style="left:463.4px;top:557px;font-size:23.6px;color:#161616;-webkit-text-stroke:0.73px #161616;letter-spacing:0.482px;">LIVE list</span>
<span class="t" style="left:463.3px;top:590px;font-size:16.8px;color:#7a7a7a;-webkit-text-stroke:0.12px #7a7a7a;letter-spacing:0.454px;">Data Scope: Display LIVE streams with start time within the selected tirme range, along with the calculation results of relevant metrics. Updated on: Jun</span>
<span class="t" style="left:463.3px;top:614px;font-size:16.8px;color:#7a7a7a;-webkit-text-stroke:0.12px #7a7a7a;letter-spacing:0.623px;">22, 2026 12:00AM</span>
<span class="t" style="left:463.3px;top:655px;font-size:17.2px;color:#161616;-webkit-text-stroke:0.49px #161616;letter-spacing:0.484px;">Linked accounts</span>
<svg class="a" style="left:600.55px;top:654.25px;" width="17.5" height="17.5" viewBox="0 0 20 20" fill="none"><circle cx="10" cy="10" r="9.1" stroke="#606060" stroke-width="1.7"/><path d="M7.1 7.8c0-1.6 1.3-2.8 3-2.8s2.9 1.100 2.900 2.600c0 1.300-.7 1.900-1.600 2.500-.9.600-1.400 1.100-1.400 2.100v.300" stroke="#606060" stroke-width="1.65" stroke-linecap="round"/><circle cx="10" cy="14.900" r="1.150" fill="#606060"/></svg>
<div class="a" style="left:463.3px;top:679.6px;width:155.5px;height:2.8px;background:#009995;border-radius:1px;"></div>
<span class="t" style="left:653.6px;top:655px;font-size:17.2px;color:#161616;-webkit-text-stroke:0.49px #161616;letter-spacing:0.657px;">Affiliate accounts</span>
<div class="a" style="left:463px;top:692.4px;width:1215.8px;height:88.3px;background:#e3e7eb;border-radius:9px;"></div>
<svg class="a" style="left:483.5px;top:716.2px;" width="17" height="17" viewBox="0 0 17 17" fill="none"><circle cx="8.500" cy="8.500" r="8.300" fill="#454a51"/><circle cx="8.500" cy="4.700" r="1.250" fill="#e3e7eb"/><path d="M6.900 7.400h2.500v4.800h1.300v1.300H6.500v-1.300h1.400V8.700H6.900z" fill="#e3e7eb"/></svg>
<span class="t" style="left:511.8px;top:718px;font-size:16.8px;color:#222;-webkit-text-stroke:0.12px #222;letter-spacing:0.490px;">Displays live streams under the latest linked accounts. Among these, only official accounts support viewing more metrics and traffic source</span>
<span class="t" style="left:511.8px;top:742px;font-size:16.8px;color:#222;-webkit-text-stroke:0.12px #222;letter-spacing:0.453px;">data, and live streams that are currently streaming allow jumping to the live dashboard.</span>
<svg class="a" style="left:1637px;top:719.5px;" width="14" height="14" viewBox="0 0 14 14" fill="none"><path d="M2 2l10 10M12 2L2 12" stroke="#444" stroke-width="1.500" stroke-linecap="round"/></svg>
<div class="a" style="left:463px;top:800.6px;width:231px;height:98px;background:#f0fbfb;border:1.600px solid #1f9f9c;border-radius:8px;"></div>
<svg class="a" style="left:473px;top:810.5px;" width="48" height="48" viewBox="0 0 48 48" fill="none"><clipPath id="cl0"><circle cx="24" cy="24" r="17.3"/></clipPath><g clip-path="url(#cl0)"><rect x="6.699999999999999" y="6.699999999999999" width="34.6" height="34.6" fill="#6fa8a2"/><ellipse cx="24" cy="43.03" rx="17.3" ry="9.52" fill="#56636b"/><rect x="19.85" y="27.46" width="8.3" height="8.65" fill="#c98f6c"/><ellipse cx="24" cy="20.19" rx="6.92" ry="9.69" fill="#e3ad8a"/><path d="M16.73 17.95c-0.87-12.11 15.4-12.11 14.53 0-1.73-3.81-4.33-5.19-7.27-5.19s-5.54 1.38-7.27 5.19z" fill="#8e4f2c"/><path d="M17.08 22.27c0.87 10.73 12.98 10.73 13.84 0-0.87 2.6-3.46 3.46-6.92 3.46s-6.05-0.87-6.92-3.46z" fill="#a7623c"/><ellipse cx="24" cy="25.73" rx="2.94" ry="1.38" fill="#fff"/></g><circle cx="24" cy="24" r="19.300" stroke="#ee2a7b" stroke-width="1.300" fill="none"/></svg>
<div class="a" style="left:482.8px;top:841px;width:28.4px;height:12.4px;background:#ea2a78;border-radius:2.5px;"></div>
<span class="t" style="left:485.6px;top:842px;font-size:9.8px;color:#fff;font-weight:700;letter-spacing:0.340px;">LIVE</span>
<span class="t" style="left:527px;top:820px;font-size:17px;color:#222;-webkit-text-stroke:0.12px #222;letter-spacing:0.188px;">Creator name</span>
<span class="t" style="left:527px;top:843px;font-size:15px;color:#858585;-webkit-text-stroke:0.12px #858585;letter-spacing:0.272px;">Official Account</span>
<span class="t" style="left:527px;top:865px;font-size:15.2px;color:#0d8a86;font-weight:700;letter-spacing:-0.396px;">Traffic</span>
<div class="a" style="left:709.25px;top:800.6px;width:230.8px;height:98px;background:#fff;border:1.300px solid #d9dce0;border-radius:8px;"></div>
<svg class="a" style="left:719.25px;top:810.5px;" width="48" height="48" viewBox="0 0 48 48" fill="none"><clipPath id="cl1"><circle cx="24" cy="24" r="17.4"/></clipPath><g clip-path="url(#cl1)"><rect x="6.600000000000001" y="6.600000000000001" width="34.8" height="34.8" fill="#fab962"/><path d="M9.21 41.4c0-8.7 6.09-12.18 14.79-12.18s14.79 3.48 14.79 12.18z" fill="#f1eee8"/><path d="M16.17 40.53c-0.87-8.7 0-15.66 0.35-20.88 0.52-13.05 14.44-13.05 14.96 0 0.35 5.22 1.22 12.18 0.35 20.88l-4.35 0.87V24h-6.96V41.4z" fill="#55341f"/><rect x="21.39" y="26.61" width="5.22" height="6.26" fill="#e5b08f"/><ellipse cx="24" cy="20.87" rx="5.05" ry="7.31" fill="#f1c4a3"/><path d="M18.61 19.65c0.35-8.7 10.44-8.7 10.79 0-2.61-3.83-8.18-3.83-10.79 0z" fill="#55341f"/><ellipse cx="24" cy="24.7" rx="2.26" ry="1.04" fill="#fff"/></g></svg>
<span class="t" style="left:773.25px;top:820px;font-size:17px;color:#222;-webkit-text-stroke:0.12px #222;letter-spacing:0.188px;">Creator name</span>
<span class="t" style="left:773.25px;top:843px;font-size:15px;color:#858585;-webkit-text-stroke:0.12px #858585;letter-spacing:0.212px;">Marketing Account</span>
<div class="a" style="left:955.5px;top:800.6px;width:230.8px;height:98px;background:#fff;border:1.300px solid #d9dce0;border-radius:8px;"></div>
<svg class="a" style="left:965.5px;top:810.5px;" width="48" height="48" viewBox="0 0 48 48" fill="none"><clipPath id="cl2"><circle cx="24" cy="24" r="17.3"/></clipPath><g clip-path="url(#cl2)"><rect x="6.699999999999999" y="6.699999999999999" width="34.6" height="34.6" fill="#fab962"/><path d="M9.29 41.3c0-8.65 6.05-12.11 14.71-12.11s14.71 3.46 14.71 12.11z" fill="#f1eee8"/><path d="M16.21 40.43c-0.87-8.65 0-15.57 0.35-20.76 0.52-12.98 14.36-12.98 14.88 0 0.35 5.19 1.21 12.11 0.35 20.76l-4.33 0.87V24h-6.92V41.3z" fill="#55341f"/><rect x="21.4" y="26.6" width="5.19" height="6.23" fill="#e5b08f"/><ellipse cx="24" cy="20.89" rx="5.02" ry="7.27" fill="#f1c4a3"/><path d="M18.64 19.67c0.35-8.65 10.38-8.65 10.73 0-2.6-3.81-8.13-3.81-10.73 0z" fill="#55341f"/><ellipse cx="24" cy="24.69" rx="2.25" ry="1.04" fill="#fff"/></g><circle cx="24" cy="24" r="19.300" stroke="#ee2a7b" stroke-width="1.300" fill="none"/></svg>
<div class="a" style="left:975.3px;top:841px;width:28.4px;height:12.4px;background:#ea2a78;border-radius:2.5px;"></div>
<span class="t" style="left:978.1px;top:842px;font-size:9.8px;color:#fff;font-weight:700;letter-spacing:0.340px;">LIVE</span>
<span class="t" style="left:1019.5px;top:820px;font-size:17px;color:#222;-webkit-text-stroke:0.12px #222;letter-spacing:0.188px;">Creator name</span>
<span class="t" style="left:1019.5px;top:843px;font-size:15px;color:#858585;-webkit-text-stroke:0.12px #858585;letter-spacing:0.212px;">Marketing Account</span>
<div class="a" style="left:1201.75px;top:800.6px;width:230.8px;height:98px;background:#fff;border:1.300px solid #d9dce0;border-radius:8px;"></div>
<svg class="a" style="left:1211.75px;top:810.5px;" width="48" height="48" viewBox="0 0 48 48" fill="none"><clipPath id="cl3"><circle cx="24" cy="24" r="17.4"/></clipPath><g clip-path="url(#cl3)"><rect x="6.600000000000001" y="6.600000000000001" width="34.8" height="34.8" fill="#fab962"/><path d="M9.21 41.4c0-8.7 6.09-12.18 14.79-12.18s14.79 3.48 14.79 12.18z" fill="#f1eee8"/><path d="M16.17 40.53c-0.87-8.7 0-15.66 0.35-20.88 0.52-13.05 14.44-13.05 14.96 0 0.35 5.22 1.22 12.18 0.35 20.88l-4.35 0.87V24h-6.96V41.4z" fill="#55341f"/><rect x="21.39" y="26.61" width="5.22" height="6.26" fill="#e5b08f"/><ellipse cx="24" cy="20.87" rx="5.05" ry="7.31" fill="#f1c4a3"/><path d="M18.61 19.65c0.35-8.7 10.44-8.7 10.79 0-2.61-3.83-8.18-3.83-10.79 0z" fill="#55341f"/><ellipse cx="24" cy="24.7" rx="2.26" ry="1.04" fill="#fff"/></g></svg>
<span class="t" style="left:1265.75px;top:820px;font-size:17px;color:#222;-webkit-text-stroke:0.12px #222;letter-spacing:0.188px;">Creator name</span>
<span class="t" style="left:1265.75px;top:843px;font-size:15px;color:#858585;-webkit-text-stroke:0.12px #858585;letter-spacing:0.212px;">Marketing Account</span>
<div class="a" style="left:1448px;top:800.6px;width:230.8px;height:98px;background:#fff;border:1.300px solid #d9dce0;border-radius:8px;"></div>
<svg class="a" style="left:1458px;top:810.5px;" width="48" height="48" viewBox="0 0 48 48" fill="none"><clipPath id="cl4"><circle cx="24" cy="24" r="17.4"/></clipPath><g clip-path="url(#cl4)"><rect x="6.600000000000001" y="6.600000000000001" width="34.8" height="34.8" fill="#eceef2"/><ellipse cx="24" cy="42.792" rx="15.659999999999998" ry="10.091999999999999" fill="#a9c3e0"/><rect x="20.52" y="27.48" width="6.96" height="7.307999999999999" fill="#dcaa8c"/><ellipse cx="24" cy="21.912" rx="6.263999999999999" ry="8.004" fill="#e6b899"/><path d="M17.04 19.65c0-9.57 13.92-9.57 13.92 0-2.61-3.48-11.309999999999999-3.48-13.92 0z" fill="#6b4a32"/><ellipse cx="24" cy="26.088" rx="2.262" ry="1.0439999999999998" fill="#fff"/></g></svg>
<span class="t" style="left:1512px;top:820px;font-size:17px;color:#222;-webkit-text-stroke:0.12px #222;letter-spacing:0.188px;">Creator name</span>
<span class="t" style="left:1512px;top:843px;font-size:15px;color:#858585;-webkit-text-stroke:0.12px #858585;letter-spacing:0.212px;">Marketing Account</span>
<div class="a" style="left:463px;top:918.6px;width:343.5px;height:38.6px;background:#fff;border:1.300px solid #d9dcdf;border-radius:4px;"></div>
<svg class="a" style="left:477.5px;top:928.5px;" width="19" height="19" viewBox="0 0 19 19" fill="none"><circle cx="8" cy="8" r="5.800" stroke="#555" stroke-width="1.600"/><path d="M12.400 12.400l4.400 4.400" stroke="#555" stroke-width="1.600" stroke-linecap="round"/></svg>
<span class="t" style="left:507.2px;top:931px;font-size:16.8px;color:#b0b0b0;-webkit-text-stroke:0.12px #b0b0b0;letter-spacing:0.182px;">Input LIVE ID to search</span>
<div class="a" style="left:1546px;top:918.4px;width:39.5px;height:39px;background:#ececec;border-radius:5px;"></div>
<svg class="a" style="left:1555.75px;top:928px;" width="20" height="20" viewBox="0 0 20 20" fill="none"><path d="M9.200 3.400H5.200c-1.200 0-2 .8-2 2v9.600c0 1.200.8 2 2 2h9.600c1.200 0 2-.8 2-2v-4.200" stroke="#222" stroke-width="1.800" stroke-linecap="round"/><path d="M8.800 11.200l.4-2.600 6-6c.5-.5 1.300-.5 1.800 0l.400.400c.5.5.5 1.300 0 1.800l-6 6z" stroke="#222" stroke-width="1.700" stroke-linejoin="round"/></svg>
<div class="a" style="left:1595.3px;top:918.4px;width:39.3px;height:39px;background:#ececec;border-radius:5px;"></div>
<svg class="a" style="left:1604.95px;top:928px;" width="20" height="20" viewBox="0 0 20 20" fill="none"><path d="M10 3v9.200M6 8.600l4 3.800 4-3.800" stroke="#222" stroke-width="1.800" stroke-linecap="round" stroke-linejoin="round"/><path d="M3.200 12.600v2.600c0 .9.700 1.600 1.600 1.600h10.400c.9 0 1.600-.7 1.600-1.600v-2.600" stroke="#222" stroke-width="1.800" stroke-linecap="round"/></svg>
<div class="a" style="left:1639.8px;top:918.4px;width:38.8px;height:39px;background:#ececec;border-radius:5px;"></div>
<svg class="a" style="left:1649.2px;top:928px;" width="20" height="20" viewBox="0 0 20 20" fill="none"><rect x="3.800" y="2.400" width="12.400" height="15.200" rx="1.800" stroke="#222" stroke-width="1.800"/><path d="M7 7h6M7 10h6M7 13h3.400" stroke="#222" stroke-width="1.700" stroke-linecap="round"/></svg>
<div class="a" style="left:463px;top:978px;width:1215.8px;height:51px;background:#f5f5f5;border-radius:9px 9px 0 0;"></div>
<span class="t" style="left:476px;top:995px;font-size:15.2px;color:#161616;-webkit-text-stroke:0.53px #161616;letter-spacing:-0.423px;">Rank</span>
<span class="t" style="left:539.4px;top:995px;font-size:15.2px;color:#161616;-webkit-text-stroke:0.53px #161616;letter-spacing:-0.205px;">LIVE info</span>
<span class="t" style="left:884.2px;top:995px;font-size:15.2px;color:#161616;-webkit-text-stroke:0.53px #161616;letter-spacing:0.333px;">Start time</span>
<svg class="a" style="left:962px;top:996.2px;" width="10" height="14" viewBox="0 0 10 14" fill="none"><path d="M2.200 5L5 2.200 7.800 5M2.200 9l2.800 2.800L7.800 9" stroke="#555" stroke-width="1.400" stroke-linecap="round" stroke-linejoin="round"/></svg>
<span class="t" style="left:1139.2px;top:995px;font-size:15.2px;color:#161616;-webkit-text-stroke:0.53px #161616;letter-spacing:-0.955px;">GMV</span>
<svg class="a" style="left:1178.65px;top:994.45px;" width="17.5" height="17.5" viewBox="0 0 20 20" fill="none"><circle cx="10" cy="10" r="9.1" stroke="#606060" stroke-width="1.7"/><path d="M7.1 7.8c0-1.6 1.3-2.8 3-2.8s2.9 1.100 2.900 2.600c0 1.300-.7 1.900-1.600 2.500-.9.600-1.400 1.100-1.400 2.100v.300" stroke="#606060" stroke-width="1.65" stroke-linecap="round"/><circle cx="10" cy="14.900" r="1.150" fill="#606060"/></svg>
<svg class="a" style="left:1206.6px;top:996.5px;" width="11" height="13" viewBox="0 0 11 13" fill="none"><path d="M5.500 1.500v9.400M1.800 7.200l3.700 3.700 3.700-3.700" stroke="#009995" stroke-width="1.600" stroke-linecap="round" stroke-linejoin="round"/></svg>
<span class="t" style="left:1322.3px;top:995px;font-size:15.2px;color:#161616;-webkit-text-stroke:0.53px #161616;letter-spacing:0.056px;">Orders</span>
<svg class="a" style="left:1375.45px;top:994.45px;" width="17.5" height="17.5" viewBox="0 0 20 20" fill="none"><circle cx="10" cy="10" r="9.1" stroke="#606060" stroke-width="1.7"/><path d="M7.1 7.8c0-1.6 1.3-2.8 3-2.8s2.9 1.100 2.900 2.600c0 1.300-.7 1.900-1.600 2.500-.9.600-1.400 1.100-1.400 2.100v.300" stroke="#606060" stroke-width="1.65" stroke-linecap="round"/><circle cx="10" cy="14.900" r="1.150" fill="#606060"/></svg>
<svg class="a" style="left:1403.5px;top:996.2px;" width="10" height="14" viewBox="0 0 10 14" fill="none"><path d="M2.200 5L5 2.200 7.800 5M2.200 9l2.800 2.800L7.800 9" stroke="#555" stroke-width="1.400" stroke-linecap="round" stroke-linejoin="round"/></svg>
<div class="a" style="left:1487px;top:990px;width:5px;height:26px;overflow:hidden;"><span class="t" style="left:0;top:5px;font-size:15.2px;color:#161616;-webkit-text-stroke:.3px #161616;">S</span></div>
<svg class="a" style="left:485px;top:1047.1000000000001px;" width="17.2" height="20.5" viewBox="0 0 17.2 20.5" fill="none"><path d="M0 0h17.200v14.200L8.600 20.300 0 14.200z" fill="#ffd320"/></svg>
<span class="t" style="left:490.9px;top:1050px;font-size:10.8px;color:#a45a17;font-weight:700;-webkit-text-stroke:0.26px #a45a17;">1</span>
<svg class="a" style="left:539px;top:1043.8000000000002px;" width="37" height="49.5" viewBox="0 0 37 49.5" fill="none"><clipPath id="th0"><rect width="37" height="49.500" rx="3.500"/></clipPath><g clip-path="url(#th0)"><rect width="37" height="49.500" fill="#ddd1c1"/><rect x="11" y="0" width="26" height="30" fill="#e1d6c8"/><rect x="0" y="0" width="10" height="24" fill="#eadfd3"/><rect x="1" y=".7" width="10.500" height="1.100" fill="#d7a463"/><rect x="9.200" y="0" width="1.100" height="14.500" fill="#d7a463"/><rect x="0" y="5.300" width="2.600" height="16.500" fill="#6a2831"/><path d="M2.600 4.500l3-1.500 3.200 1.800.3 17.500-6.500.5z" fill="#ecd6d0"/><path d="M5.500 5l1.500 1 .5 16-2.500.3z" fill="#dcc0ba"/><rect x=".4" y="23.700" width="8.400" height="10.400" rx="1.200" fill="#26272d"/><rect x="2" y="25" width="5" height="1" fill="#4a4b52"/><rect x="0" y="34.200" width="9" height="2.500" fill="#b9b2aa"/><rect x=".5" y="36.500" width="7.200" height="13" fill="#30353c"/><rect x="2.600" y="38.500" width="3.600" height="11" fill="#b5ccd4"/><rect x="0" y="31" width="1.500" height="8" fill="#b5232c"/><path d="M27 23.500c5 .500 9.500 3 10 8V44H27z" fill="#bcc6dd"/><path d="M30 30l3 14h-3.500z" fill="#a9b4cf"/><path d="M8.700 44c.5-4 2.500-7 6.500-8.500V44z" fill="#bcc6dd"/><path d="M14.800 44c0-9 1-14.200 3.200-14.200h7.500c2 0 2.700 5 2.700 14.200z" fill="#f7f5f6"/><path d="M17.500 30c1.800 2.200 7 2.200 8.800 0l1.200-6.500-2.500-1h-6.500l-2 1.500z" fill="#eec6a9"/><path d="M11.600 18c.8-2 2.700-2.500 3.600-1.500l1 3-1 4c1 5 1.300 10 .6 15.500l-3 1c-1.500-7-2-14-1.200-22z" fill="#efc8ab"/><ellipse cx="22.100" cy="14" rx="5.200" ry="7.800" fill="#f0caad"/><path d="M15.800 13.500c-1.200-7 2.300-10.400 6.300-10.400s7.200 3.400 6.200 9.900c-1-3.400-3.400-5-6.200-5s-5.300 2-6.300 5.500z" fill="#2a2226"/><ellipse cx="22.300" cy="18.200" rx="1.900" ry="1.300" fill="#c54a44"/><ellipse cx="22.300" cy="17.900" rx="1.300" ry=".5" fill="#fff"/><rect x="19" y="12.300" width="2" height=".7" fill="#3a2a2a"/><rect x="23.500" y="12.300" width="2" height=".7" fill="#3a2a2a"/><rect x="8.500" y="44" width="28.500" height="5.500" fill="#ead9d6"/><rect x="12" y="45" width="15" height="2.200" rx="1" fill="#e78b9c"/><rect x="12" y="47.400" width="10" height="2.100" fill="#2c2d35"/><rect x="27" y="45.500" width="8" height="1.500" rx=".7" fill="#f3e9e6"/></g></svg>
<span class="t" style="left:585.7px;top:1049px;font-size:16.8px;color:#12877f;-webkit-text-stroke:0.18px #12877f;letter-spacing:0.151px;">LIVE name name name placehol...</span>
<span class="t" style="left:585.7px;top:1077px;font-size:14.8px;color:#757575;-webkit-text-stroke:0.12px #757575;letter-spacing:1.968px;">ID:7611977374170647327</span>
<svg class="a" style="left:808.3px;top:1074.4px;" width="17" height="17" viewBox="0 0 17 17" fill="none"><rect x="1.500" y="5.600" width="9.800" height="9.800" rx="1.600" stroke="#4a4a4a" stroke-width="1.750"/><path d="M6 5.200V3.300c0-.9.700-1.600 1.600-1.600h6.300c.9 0 1.600.700 1.600 1.600v6.300c0 .9-.7 1.600-1.600 1.600h-2.200" stroke="#4a4a4a" stroke-width="1.750"/></svg>
<span class="t" style="left:884.2px;top:1048px;font-size:17px;color:#222;-webkit-text-stroke:0.12px #222;letter-spacing:0.416px;">Aug 25, 2025 10:23</span>
<span class="t" style="left:882.8px;top:1074px;font-size:15px;color:#7a7a7a;-webkit-text-stroke:0.12px #7a7a7a;letter-spacing:0.071px;">10h 34m</span>
<span class="t" style="left:1159.3px;top:1048px;font-size:17px;color:#222;-webkit-text-stroke:0.12px #222;letter-spacing:0.878px;">$ 8,888</span>
<span class="t" style="left:1370.5px;top:1048px;font-size:17px;color:#222;-webkit-text-stroke:0.12px #222;letter-spacing:1.238px;">8,888</span>
<div class="a" style="left:463px;top:1111px;width:1215.8px;height:1px;background:#e2e4e7;"></div>
<svg class="a" style="left:485px;top:1130.67px;" width="17.2" height="20.5" viewBox="0 0 17.2 20.5" fill="none"><path d="M0 0h17.200v14.200L8.600 20.300 0 14.200z" fill="#b9c7e3"/></svg>
<span class="t" style="left:490.6px;top:1134px;font-size:10.8px;color:#3c5281;font-weight:700;-webkit-text-stroke:0.26px #3c5281;">2</span>
<svg class="a" style="left:539px;top:1127.3700000000001px;" width="37" height="49.5" viewBox="0 0 37 49.5" fill="none"><clipPath id="th1"><rect width="37" height="49.500" rx="3.500"/></clipPath><g clip-path="url(#th1)"><rect width="37" height="49.500" fill="#ecebe8"/><rect x="6" y="0" width="1.200" height="49.500" fill="#dcdad6"/><rect x="13" y="0" width="1.200" height="49.500" fill="#dcdad6"/><rect x="20" y="0" width="1.200" height="49.500" fill="#dcdad6"/><rect x="28.500" y="0" width="1.500" height="9" fill="#bdbdbd"/><path d="M4 49.500l2-34 5-5 6 3 1 10 5 2-2 8-5-1 1 17z" fill="#f2a9a6"/><path d="M14 17l8 2 2 9-7 3z" fill="#f5b3ae"/><path d="M10 8l2-3 2 3 3 3h-9z" fill="#3a2a2a"/><path d="M0 27c4-2 7 1 7 6v6l-7 10z" fill="#23221f"/><path d="M25 10c0-4 8-4 8 0l1.500 10h-10.500z" fill="#2f2221"/><ellipse cx="29.200" cy="11.500" rx="3.200" ry="4" fill="#d9a384"/><path d="M24 49.500l1-14-1-9c0-5 2-8 5.500-8s5.500 3 5.500 8l-2 9 1.500 14z" fill="#ef7f80"/><path d="M34 20l3-1v6l-2.500 1z" fill="#d9a384"/><path d="M23 24l-2 7 2 1 2-6z" fill="#d9a384"/></g></svg>
<span class="t" style="left:585.7px;top:1133px;font-size:16.8px;color:#12877f;-webkit-text-stroke:0.18px #12877f;letter-spacing:0.151px;">LIVE name name name placehol...</span>
<span class="t" style="left:585.7px;top:1160px;font-size:14.8px;color:#757575;-webkit-text-stroke:0.12px #757575;letter-spacing:1.968px;">ID:7611977374170647327</span>
<svg class="a" style="left:808.3px;top:1157.97px;" width="17" height="17" viewBox="0 0 17 17" fill="none"><rect x="1.500" y="5.600" width="9.800" height="9.800" rx="1.600" stroke="#4a4a4a" stroke-width="1.750"/><path d="M6 5.200V3.300c0-.9.700-1.600 1.600-1.600h6.300c.9 0 1.600.700 1.600 1.600v6.300c0 .9-.7 1.600-1.600 1.600h-2.200" stroke="#4a4a4a" stroke-width="1.750"/></svg>
<span class="t" style="left:884.2px;top:1132px;font-size:17px;color:#222;-webkit-text-stroke:0.12px #222;letter-spacing:0.416px;">Aug 25, 2025 10:23</span>
<span class="t" style="left:882.8px;top:1157px;font-size:15px;color:#7a7a7a;-webkit-text-stroke:0.12px #7a7a7a;letter-spacing:0.071px;">10h 34m</span>
<span class="t" style="left:1159.3px;top:1132px;font-size:17px;color:#222;-webkit-text-stroke:0.12px #222;letter-spacing:0.878px;">$ 8,888</span>
<span class="t" style="left:1370.5px;top:1132px;font-size:17px;color:#222;-webkit-text-stroke:0.12px #222;letter-spacing:1.238px;">8,888</span>
<div class="a" style="left:463px;top:1195px;width:1215.8px;height:1px;background:#e2e4e7;"></div>
<svg class="a" style="left:485px;top:1214.24px;" width="17.2" height="20.5" viewBox="0 0 17.2 20.5" fill="none"><path d="M0 0h17.200v14.200L8.600 20.300 0 14.200z" fill="#fbc9a2"/></svg>
<span class="t" style="left:490.6px;top:1217px;font-size:10.8px;color:#a3654c;font-weight:700;-webkit-text-stroke:0.26px #a3654c;">3</span>
<svg class="a" style="left:539px;top:1210.94px;" width="37" height="49.5" viewBox="0 0 37 49.5" fill="none"><clipPath id="th2"><rect width="37" height="49.500" rx="3.500"/></clipPath><g clip-path="url(#th2)"><rect width="37" height="49.500" fill="#ddd1c1"/><rect x="11" y="0" width="26" height="30" fill="#e1d6c8"/><rect x="0" y="0" width="10" height="24" fill="#eadfd3"/><rect x="1" y=".7" width="10.500" height="1.100" fill="#d7a463"/><rect x="9.200" y="0" width="1.100" height="14.500" fill="#d7a463"/><rect x="0" y="5.300" width="2.600" height="16.500" fill="#6a2831"/><path d="M2.600 4.500l3-1.500 3.200 1.800.3 17.500-6.500.5z" fill="#ecd6d0"/><path d="M5.500 5l1.500 1 .5 16-2.500.3z" fill="#dcc0ba"/><rect x=".4" y="23.700" width="8.400" height="10.400" rx="1.200" fill="#26272d"/><rect x="2" y="25" width="5" height="1" fill="#4a4b52"/><rect x="0" y="34.200" width="9" height="2.500" fill="#b9b2aa"/><rect x=".5" y="36.500" width="7.200" height="13" fill="#30353c"/><rect x="2.600" y="38.500" width="3.600" height="11" fill="#b5ccd4"/><rect x="0" y="31" width="1.500" height="8" fill="#b5232c"/><path d="M27 23.500c5 .500 9.500 3 10 8V44H27z" fill="#bcc6dd"/><path d="M30 30l3 14h-3.500z" fill="#a9b4cf"/><path d="M8.700 44c.5-4 2.500-7 6.500-8.500V44z" fill="#bcc6dd"/><path d="M14.800 44c0-9 1-14.200 3.200-14.200h7.500c2 0 2.700 5 2.700 14.200z" fill="#f7f5f6"/><path d="M17.500 30c1.800 2.200 7 2.200 8.800 0l1.200-6.500-2.500-1h-6.500l-2 1.500z" fill="#eec6a9"/><path d="M11.600 18c.8-2 2.700-2.500 3.600-1.500l1 3-1 4c1 5 1.300 10 .6 15.500l-3 1c-1.500-7-2-14-1.200-22z" fill="#efc8ab"/><ellipse cx="22.100" cy="14" rx="5.200" ry="7.800" fill="#f0caad"/><path d="M15.800 13.500c-1.200-7 2.300-10.400 6.300-10.400s7.200 3.400 6.200 9.900c-1-3.400-3.400-5-6.200-5s-5.300 2-6.300 5.500z" fill="#2a2226"/><ellipse cx="22.300" cy="18.200" rx="1.900" ry="1.300" fill="#c54a44"/><ellipse cx="22.300" cy="17.900" rx="1.300" ry=".5" fill="#fff"/><rect x="19" y="12.300" width="2" height=".7" fill="#3a2a2a"/><rect x="23.500" y="12.300" width="2" height=".7" fill="#3a2a2a"/><rect x="8.500" y="44" width="28.500" height="5.500" fill="#ead9d6"/><rect x="12" y="45" width="15" height="2.200" rx="1" fill="#e78b9c"/><rect x="12" y="47.400" width="10" height="2.100" fill="#2c2d35"/><rect x="27" y="45.500" width="8" height="1.500" rx=".7" fill="#f3e9e6"/></g></svg>
<span class="t" style="left:585.7px;top:1216px;font-size:16.8px;color:#12877f;-webkit-text-stroke:0.18px #12877f;letter-spacing:0.151px;">LIVE name name name placehol...</span>
<span class="t" style="left:585.7px;top:1244px;font-size:14.8px;color:#757575;-webkit-text-stroke:0.12px #757575;letter-spacing:1.968px;">ID:7611977374170647327</span>
<svg class="a" style="left:808.3px;top:1241.54px;" width="17" height="17" viewBox="0 0 17 17" fill="none"><rect x="1.500" y="5.600" width="9.800" height="9.800" rx="1.600" stroke="#4a4a4a" stroke-width="1.750"/><path d="M6 5.200V3.300c0-.9.700-1.600 1.600-1.600h6.300c.9 0 1.600.700 1.600 1.600v6.300c0 .9-.7 1.600-1.600 1.600h-2.200" stroke="#4a4a4a" stroke-width="1.750"/></svg>
<span class="t" style="left:884.2px;top:1215px;font-size:17px;color:#222;-webkit-text-stroke:0.12px #222;letter-spacing:0.416px;">Aug 25, 2025 10:23</span>
<span class="t" style="left:882.8px;top:1241px;font-size:15px;color:#7a7a7a;-webkit-text-stroke:0.12px #7a7a7a;letter-spacing:0.071px;">10h 34m</span>
<span class="t" style="left:1159.3px;top:1215px;font-size:17px;color:#222;-webkit-text-stroke:0.12px #222;letter-spacing:0.878px;">$ 8,888</span>
<span class="t" style="left:1370.5px;top:1215px;font-size:17px;color:#222;-webkit-text-stroke:0.12px #222;letter-spacing:1.238px;">8,888</span>
<div class="a" style="left:463px;top:1278px;width:1215.8px;height:1px;background:#e2e4e7;"></div>
<span class="t" style="left:487.8px;top:1299px;font-size:17px;color:#222;-webkit-text-stroke:0.12px #222;">4</span>
<svg class="a" style="left:539px;top:1294.5100000000002px;" width="37" height="49.5" viewBox="0 0 37 49.5" fill="none"><clipPath id="th3"><rect width="37" height="49.500" rx="3.500"/></clipPath><g clip-path="url(#th3)"><rect width="37" height="49.500" fill="#ddd1c1"/><rect x="11" y="0" width="26" height="30" fill="#e1d6c8"/><rect x="0" y="0" width="10" height="24" fill="#eadfd3"/><rect x="1" y=".7" width="10.500" height="1.100" fill="#d7a463"/><rect x="9.200" y="0" width="1.100" height="14.500" fill="#d7a463"/><rect x="0" y="5.300" width="2.600" height="16.500" fill="#6a2831"/><path d="M2.600 4.500l3-1.500 3.200 1.800.3 17.500-6.500.5z" fill="#ecd6d0"/><path d="M5.500 5l1.500 1 .5 16-2.500.3z" fill="#dcc0ba"/><rect x=".4" y="23.700" width="8.400" height="10.400" rx="1.200" fill="#26272d"/><rect x="2" y="25" width="5" height="1" fill="#4a4b52"/><rect x="0" y="34.200" width="9" height="2.500" fill="#b9b2aa"/><rect x=".5" y="36.500" width="7.200" height="13" fill="#30353c"/><rect x="2.600" y="38.500" width="3.600" height="11" fill="#b5ccd4"/><rect x="0" y="31" width="1.500" height="8" fill="#b5232c"/><path d="M27 23.500c5 .500 9.500 3 10 8V44H27z" fill="#bcc6dd"/><path d="M30 30l3 14h-3.500z" fill="#a9b4cf"/><path d="M8.700 44c.5-4 2.500-7 6.500-8.500V44z" fill="#bcc6dd"/><path d="M14.800 44c0-9 1-14.200 3.200-14.200h7.500c2 0 2.700 5 2.700 14.200z" fill="#f7f5f6"/><path d="M17.500 30c1.800 2.200 7 2.200 8.800 0l1.200-6.500-2.500-1h-6.500l-2 1.500z" fill="#eec6a9"/><path d="M11.600 18c.8-2 2.700-2.500 3.600-1.500l1 3-1 4c1 5 1.300 10 .6 15.500l-3 1c-1.500-7-2-14-1.200-22z" fill="#efc8ab"/><ellipse cx="22.100" cy="14" rx="5.200" ry="7.800" fill="#f0caad"/><path d="M15.800 13.500c-1.200-7 2.300-10.400 6.300-10.400s7.200 3.400 6.200 9.900c-1-3.400-3.400-5-6.200-5s-5.300 2-6.300 5.500z" fill="#2a2226"/><ellipse cx="22.300" cy="18.200" rx="1.900" ry="1.300" fill="#c54a44"/><ellipse cx="22.300" cy="17.900" rx="1.300" ry=".5" fill="#fff"/><rect x="19" y="12.300" width="2" height=".7" fill="#3a2a2a"/><rect x="23.500" y="12.300" width="2" height=".7" fill="#3a2a2a"/><rect x="8.500" y="44" width="28.500" height="5.500" fill="#ead9d6"/><rect x="12" y="45" width="15" height="2.200" rx="1" fill="#e78b9c"/><rect x="12" y="47.400" width="10" height="2.100" fill="#2c2d35"/><rect x="27" y="45.500" width="8" height="1.500" rx=".7" fill="#f3e9e6"/></g></svg>
<span class="t" style="left:585.7px;top:1300px;font-size:16.8px;color:#12877f;-webkit-text-stroke:0.18px #12877f;letter-spacing:0.151px;">LIVE name name name placehol...</span>
<span class="t" style="left:585.7px;top:1328px;font-size:14.8px;color:#757575;-webkit-text-stroke:0.12px #757575;letter-spacing:1.968px;">ID:7611977374170647327</span>
<svg class="a" style="left:808.3px;top:1325.1100000000001px;" width="17" height="17" viewBox="0 0 17 17" fill="none"><rect x="1.500" y="5.600" width="9.800" height="9.800" rx="1.600" stroke="#4a4a4a" stroke-width="1.750"/><path d="M6 5.200V3.300c0-.9.700-1.600 1.600-1.600h6.300c.9 0 1.600.700 1.600 1.600v6.300c0 .9-.7 1.600-1.600 1.600h-2.200" stroke="#4a4a4a" stroke-width="1.750"/></svg>
<span class="t" style="left:884.2px;top:1299px;font-size:17px;color:#222;-webkit-text-stroke:0.12px #222;letter-spacing:0.416px;">Aug 25, 2025 10:23</span>
<span class="t" style="left:882.8px;top:1324px;font-size:15px;color:#7a7a7a;-webkit-text-stroke:0.12px #7a7a7a;letter-spacing:0.071px;">10h 34m</span>
<span class="t" style="left:1159.3px;top:1299px;font-size:17px;color:#222;-webkit-text-stroke:0.12px #222;letter-spacing:0.878px;">$ 8,888</span>
<span class="t" style="left:1370.5px;top:1299px;font-size:17px;color:#222;-webkit-text-stroke:0.12px #222;letter-spacing:1.238px;">8,888</span>
<div class="a" style="left:463px;top:1362px;width:1215.8px;height:1px;background:#e2e4e7;"></div>
<span class="t" style="left:487.8px;top:1382px;font-size:17px;color:#222;-webkit-text-stroke:0.12px #222;">5</span>
<svg class="a" style="left:539px;top:1378.0800000000002px;" width="37" height="49.5" viewBox="0 0 37 49.5" fill="none"><clipPath id="th4"><rect width="37" height="49.500" rx="3.500"/></clipPath><g clip-path="url(#th4)"><rect width="37" height="49.500" fill="#ddd1c1"/><rect x="11" y="0" width="26" height="30" fill="#e1d6c8"/><rect x="0" y="0" width="10" height="24" fill="#eadfd3"/><rect x="1" y=".7" width="10.500" height="1.100" fill="#d7a463"/><rect x="9.200" y="0" width="1.100" height="14.500" fill="#d7a463"/><rect x="0" y="5.300" width="2.600" height="16.500" fill="#6a2831"/><path d="M2.600 4.500l3-1.500 3.200 1.800.3 17.500-6.500.5z" fill="#ecd6d0"/><path d="M5.500 5l1.500 1 .5 16-2.500.3z" fill="#dcc0ba"/><rect x=".4" y="23.700" width="8.400" height="10.400" rx="1.200" fill="#26272d"/><rect x="2" y="25" width="5" height="1" fill="#4a4b52"/><rect x="0" y="34.200" width="9" height="2.500" fill="#b9b2aa"/><rect x=".5" y="36.500" width="7.200" height="13" fill="#30353c"/><rect x="2.600" y="38.500" width="3.600" height="11" fill="#b5ccd4"/><rect x="0" y="31" width="1.500" height="8" fill="#b5232c"/><path d="M27 23.500c5 .500 9.500 3 10 8V44H27z" fill="#bcc6dd"/><path d="M30 30l3 14h-3.500z" fill="#a9b4cf"/><path d="M8.700 44c.5-4 2.500-7 6.500-8.500V44z" fill="#bcc6dd"/><path d="M14.800 44c0-9 1-14.200 3.200-14.200h7.500c2 0 2.700 5 2.700 14.200z" fill="#f7f5f6"/><path d="M17.500 30c1.800 2.200 7 2.200 8.800 0l1.200-6.500-2.500-1h-6.500l-2 1.500z" fill="#eec6a9"/><path d="M11.600 18c.8-2 2.700-2.500 3.600-1.500l1 3-1 4c1 5 1.300 10 .6 15.500l-3 1c-1.500-7-2-14-1.200-22z" fill="#efc8ab"/><ellipse cx="22.100" cy="14" rx="5.200" ry="7.800" fill="#f0caad"/><path d="M15.800 13.500c-1.200-7 2.300-10.400 6.300-10.400s7.200 3.400 6.200 9.900c-1-3.400-3.400-5-6.200-5s-5.300 2-6.300 5.500z" fill="#2a2226"/><ellipse cx="22.300" cy="18.200" rx="1.900" ry="1.300" fill="#c54a44"/><ellipse cx="22.300" cy="17.900" rx="1.300" ry=".5" fill="#fff"/><rect x="19" y="12.300" width="2" height=".7" fill="#3a2a2a"/><rect x="23.500" y="12.300" width="2" height=".7" fill="#3a2a2a"/><rect x="8.500" y="44" width="28.500" height="5.500" fill="#ead9d6"/><rect x="12" y="45" width="15" height="2.200" rx="1" fill="#e78b9c"/><rect x="12" y="47.400" width="10" height="2.100" fill="#2c2d35"/><rect x="27" y="45.500" width="8" height="1.500" rx=".7" fill="#f3e9e6"/></g></svg>
<span class="t" style="left:585.7px;top:1383px;font-size:16.8px;color:#12877f;-webkit-text-stroke:0.18px #12877f;letter-spacing:0.151px;">LIVE name name name placehol...</span>
<span class="t" style="left:585.7px;top:1411px;font-size:14.8px;color:#757575;-webkit-text-stroke:0.12px #757575;letter-spacing:1.968px;">ID:7611977374170647327</span>
<svg class="a" style="left:808.3px;top:1408.68px;" width="17" height="17" viewBox="0 0 17 17" fill="none"><rect x="1.500" y="5.600" width="9.800" height="9.800" rx="1.600" stroke="#4a4a4a" stroke-width="1.750"/><path d="M6 5.200V3.300c0-.9.700-1.600 1.600-1.600h6.300c.9 0 1.600.700 1.600 1.600v6.300c0 .9-.7 1.600-1.600 1.600h-2.200" stroke="#4a4a4a" stroke-width="1.750"/></svg>
<span class="t" style="left:884.2px;top:1382px;font-size:17px;color:#222;-webkit-text-stroke:0.12px #222;letter-spacing:0.416px;">Aug 25, 2025 10:23</span>
<span class="t" style="left:882.8px;top:1408px;font-size:15px;color:#7a7a7a;-webkit-text-stroke:0.12px #7a7a7a;letter-spacing:0.071px;">10h 34m</span>
<span class="t" style="left:1159.3px;top:1382px;font-size:17px;color:#222;-webkit-text-stroke:0.12px #222;letter-spacing:0.878px;">$ 8,888</span>
<span class="t" style="left:1370.5px;top:1382px;font-size:17px;color:#222;-webkit-text-stroke:0.12px #222;letter-spacing:1.238px;">8,888</span>
<div class="a" style="left:463px;top:1445px;width:1215.8px;height:1px;background:#e2e4e7;"></div>
<span class="t" style="left:487.8px;top:1466px;font-size:17px;color:#222;-webkit-text-stroke:0.12px #222;">6</span>
<svg class="a" style="left:539px;top:1461.65px;" width="37" height="49.5" viewBox="0 0 37 49.5" fill="none"><clipPath id="th5"><rect width="37" height="49.500" rx="3.500"/></clipPath><g clip-path="url(#th5)"><rect width="37" height="49.500" fill="#ddd1c1"/><rect x="11" y="0" width="26" height="30" fill="#e1d6c8"/><rect x="0" y="0" width="10" height="24" fill="#eadfd3"/><rect x="1" y=".7" width="10.500" height="1.100" fill="#d7a463"/><rect x="9.200" y="0" width="1.100" height="14.500" fill="#d7a463"/><rect x="0" y="5.300" width="2.600" height="16.500" fill="#6a2831"/><path d="M2.600 4.500l3-1.500 3.200 1.800.3 17.500-6.500.5z" fill="#ecd6d0"/><path d="M5.500 5l1.500 1 .5 16-2.500.3z" fill="#dcc0ba"/><rect x=".4" y="23.700" width="8.400" height="10.400" rx="1.200" fill="#26272d"/><rect x="2" y="25" width="5" height="1" fill="#4a4b52"/><rect x="0" y="34.200" width="9" height="2.500" fill="#b9b2aa"/><rect x=".5" y="36.500" width="7.200" height="13" fill="#30353c"/><rect x="2.600" y="38.500" width="3.600" height="11" fill="#b5ccd4"/><rect x="0" y="31" width="1.500" height="8" fill="#b5232c"/><path d="M27 23.500c5 .500 9.500 3 10 8V44H27z" fill="#bcc6dd"/><path d="M30 30l3 14h-3.500z" fill="#a9b4cf"/><path d="M8.700 44c.5-4 2.500-7 6.500-8.500V44z" fill="#bcc6dd"/><path d="M14.800 44c0-9 1-14.200 3.200-14.200h7.500c2 0 2.700 5 2.700 14.200z" fill="#f7f5f6"/><path d="M17.500 30c1.800 2.200 7 2.200 8.800 0l1.200-6.500-2.500-1h-6.500l-2 1.500z" fill="#eec6a9"/><path d="M11.600 18c.8-2 2.700-2.500 3.600-1.500l1 3-1 4c1 5 1.300 10 .6 15.500l-3 1c-1.500-7-2-14-1.200-22z" fill="#efc8ab"/><ellipse cx="22.100" cy="14" rx="5.200" ry="7.800" fill="#f0caad"/><path d="M15.800 13.500c-1.200-7 2.300-10.400 6.300-10.400s7.200 3.400 6.200 9.900c-1-3.400-3.400-5-6.200-5s-5.300 2-6.300 5.500z" fill="#2a2226"/><ellipse cx="22.300" cy="18.200" rx="1.900" ry="1.300" fill="#c54a44"/><ellipse cx="22.300" cy="17.900" rx="1.300" ry=".5" fill="#fff"/><rect x="19" y="12.300" width="2" height=".7" fill="#3a2a2a"/><rect x="23.500" y="12.300" width="2" height=".7" fill="#3a2a2a"/><rect x="8.500" y="44" width="28.500" height="5.500" fill="#ead9d6"/><rect x="12" y="45" width="15" height="2.200" rx="1" fill="#e78b9c"/><rect x="12" y="47.400" width="10" height="2.100" fill="#2c2d35"/><rect x="27" y="45.500" width="8" height="1.500" rx=".7" fill="#f3e9e6"/></g></svg>
<span class="t" style="left:585.7px;top:1467px;font-size:16.8px;color:#12877f;-webkit-text-stroke:0.18px #12877f;letter-spacing:0.151px;">LIVE name name name placehol...</span>
<span class="t" style="left:585.7px;top:1495px;font-size:14.8px;color:#757575;-webkit-text-stroke:0.12px #757575;letter-spacing:1.968px;">ID:7611977374170647327</span>
<svg class="a" style="left:808.3px;top:1492.25px;" width="17" height="17" viewBox="0 0 17 17" fill="none"><rect x="1.500" y="5.600" width="9.800" height="9.800" rx="1.600" stroke="#4a4a4a" stroke-width="1.750"/><path d="M6 5.200V3.300c0-.9.700-1.600 1.600-1.600h6.300c.9 0 1.600.700 1.600 1.600v6.300c0 .9-.7 1.600-1.600 1.600h-2.200" stroke="#4a4a4a" stroke-width="1.750"/></svg>
<span class="t" style="left:884.2px;top:1466px;font-size:17px;color:#222;-webkit-text-stroke:0.12px #222;letter-spacing:0.416px;">Aug 25, 2025 10:23</span>
<span class="t" style="left:882.8px;top:1492px;font-size:15px;color:#7a7a7a;-webkit-text-stroke:0.12px #7a7a7a;letter-spacing:0.071px;">10h 34m</span>
<span class="t" style="left:1159.3px;top:1466px;font-size:17px;color:#222;-webkit-text-stroke:0.12px #222;letter-spacing:0.878px;">$ 8,888</span>
<span class="t" style="left:1370.5px;top:1466px;font-size:17px;color:#222;-webkit-text-stroke:0.12px #222;letter-spacing:1.238px;">8,888</span>
<div class="a" style="left:463px;top:1529px;width:1215.8px;height:1px;background:#e2e4e7;"></div>
<span class="t" style="left:487.8px;top:1550px;font-size:17px;color:#222;-webkit-text-stroke:0.12px #222;">7</span>
<svg class="a" style="left:539px;top:1545.2200000000003px;" width="37" height="49.5" viewBox="0 0 37 49.5" fill="none"><clipPath id="th6"><rect width="37" height="49.500" rx="3.500"/></clipPath><g clip-path="url(#th6)"><rect width="37" height="49.500" fill="#ddd1c1"/><rect x="11" y="0" width="26" height="30" fill="#e1d6c8"/><rect x="0" y="0" width="10" height="24" fill="#eadfd3"/><rect x="1" y=".7" width="10.500" height="1.100" fill="#d7a463"/><rect x="9.200" y="0" width="1.100" height="14.500" fill="#d7a463"/><rect x="0" y="5.300" width="2.600" height="16.500" fill="#6a2831"/><path d="M2.600 4.500l3-1.500 3.200 1.800.3 17.500-6.500.5z" fill="#ecd6d0"/><path d="M5.500 5l1.500 1 .5 16-2.500.3z" fill="#dcc0ba"/><rect x=".4" y="23.700" width="8.400" height="10.400" rx="1.200" fill="#26272d"/><rect x="2" y="25" width="5" height="1" fill="#4a4b52"/><rect x="0" y="34.200" width="9" height="2.500" fill="#b9b2aa"/><rect x=".5" y="36.500" width="7.200" height="13" fill="#30353c"/><rect x="2.600" y="38.500" width="3.600" height="11" fill="#b5ccd4"/><rect x="0" y="31" width="1.500" height="8" fill="#b5232c"/><path d="M27 23.500c5 .500 9.500 3 10 8V44H27z" fill="#bcc6dd"/><path d="M30 30l3 14h-3.500z" fill="#a9b4cf"/><path d="M8.700 44c.5-4 2.500-7 6.500-8.500V44z" fill="#bcc6dd"/><path d="M14.800 44c0-9 1-14.200 3.200-14.200h7.500c2 0 2.700 5 2.700 14.200z" fill="#f7f5f6"/><path d="M17.500 30c1.800 2.200 7 2.200 8.800 0l1.200-6.500-2.500-1h-6.500l-2 1.500z" fill="#eec6a9"/><path d="M11.600 18c.8-2 2.700-2.500 3.600-1.500l1 3-1 4c1 5 1.300 10 .6 15.500l-3 1c-1.500-7-2-14-1.200-22z" fill="#efc8ab"/><ellipse cx="22.100" cy="14" rx="5.200" ry="7.800" fill="#f0caad"/><path d="M15.800 13.500c-1.200-7 2.300-10.400 6.300-10.400s7.200 3.400 6.200 9.900c-1-3.400-3.400-5-6.200-5s-5.300 2-6.300 5.500z" fill="#2a2226"/><ellipse cx="22.300" cy="18.200" rx="1.900" ry="1.300" fill="#c54a44"/><ellipse cx="22.300" cy="17.900" rx="1.300" ry=".5" fill="#fff"/><rect x="19" y="12.300" width="2" height=".7" fill="#3a2a2a"/><rect x="23.500" y="12.300" width="2" height=".7" fill="#3a2a2a"/><rect x="8.500" y="44" width="28.500" height="5.500" fill="#ead9d6"/><rect x="12" y="45" width="15" height="2.200" rx="1" fill="#e78b9c"/><rect x="12" y="47.400" width="10" height="2.100" fill="#2c2d35"/><rect x="27" y="45.500" width="8" height="1.500" rx=".7" fill="#f3e9e6"/></g></svg>
<div class="a" style="left:541.3px;top:1547.1200000000001px;width:24.7px;height:12.3px;background:#f5264c;border-radius:2.5px;"></div>
<span class="t" style="left:543.7px;top:1548px;font-size:9.6px;color:#fff;-webkit-text-stroke:0.18px #fff;letter-spacing:-0.404px;">LIVE</span>
<span class="t" style="left:585.7px;top:1551px;font-size:16.8px;color:#12877f;-webkit-text-stroke:0.18px #12877f;letter-spacing:0.151px;">LIVE name name name placehol...</span>
<span class="t" style="left:585.7px;top:1578px;font-size:14.8px;color:#757575;-webkit-text-stroke:0.12px #757575;letter-spacing:1.968px;">ID:7611977374170647327</span>
<svg class="a" style="left:808.3px;top:1575.8200000000002px;" width="17" height="17" viewBox="0 0 17 17" fill="none"><rect x="1.500" y="5.600" width="9.800" height="9.800" rx="1.600" stroke="#4a4a4a" stroke-width="1.750"/><path d="M6 5.200V3.300c0-.9.700-1.600 1.600-1.600h6.300c.9 0 1.600.700 1.600 1.600v6.300c0 .9-.7 1.600-1.600 1.600h-2.200" stroke="#4a4a4a" stroke-width="1.750"/></svg>
<span class="t" style="left:884.2px;top:1550px;font-size:17px;color:#222;-webkit-text-stroke:0.12px #222;letter-spacing:0.416px;">Aug 25, 2025 10:23</span>
<span class="t" style="left:882.8px;top:1575px;font-size:15px;color:#7a7a7a;-webkit-text-stroke:0.12px #7a7a7a;letter-spacing:0.071px;">10h 34m</span>
<span class="t" style="left:1159.3px;top:1550px;font-size:17px;color:#222;-webkit-text-stroke:0.12px #222;letter-spacing:0.878px;">$ 8,888</span>
<span class="t" style="left:1370.5px;top:1550px;font-size:17px;color:#222;-webkit-text-stroke:0.12px #222;letter-spacing:1.238px;">8,888</span>
<div class="a" style="left:1492px;top:978px;width:186.800px;height:640px;background:#fff;box-shadow:-6px 0 8px -4px rgba(0,0,0,.12);"></div>
<div class="a" style="left:1492px;top:978px;width:186.8px;height:50.4px;background:#f5f5f5;border-radius:0 9px 0 0;"></div>
<span class="t" style="left:1507.2px;top:995px;font-size:15.2px;color:#161616;-webkit-text-stroke:0.53px #161616;letter-spacing:0.456px;">Action</span>
<div class="a" style="left:1507.2px;top:1041.7px;width:88px;height:29px;background:#ececec;border-radius:5px;"></div>
<span class="t" style="left:1517.5px;top:1048px;font-size:15.2px;color:#222;-webkit-text-stroke:0.44px #222;letter-spacing:0.100px;">Diagnosis</span>
<div class="a" style="left:1600.6px;top:1041.7px;width:63.5px;height:29px;background:#ececec;border-radius:5px;"></div>
<span class="t" style="left:1610.6px;top:1048px;font-size:15.2px;color:#222;-webkit-text-stroke:0.44px #222;letter-spacing:0.373px;">Traffic</span>
<div class="a" style="left:1492px;top:1111px;width:186.8px;height:1px;background:#e2e4e7;"></div>
<div class="a" style="left:1507.2px;top:1125.27px;width:88px;height:29px;background:#ececec;border-radius:5px;"></div>
<span class="t" style="left:1517.5px;top:1132px;font-size:15.2px;color:#222;-webkit-text-stroke:0.44px #222;letter-spacing:0.100px;">Diagnosis</span>
<div class="a" style="left:1600.6px;top:1125.27px;width:63.5px;height:29px;background:#ececec;border-radius:5px;"></div>
<span class="t" style="left:1610.6px;top:1132px;font-size:15.2px;color:#222;-webkit-text-stroke:0.44px #222;letter-spacing:0.373px;">Traffic</span>
<div class="a" style="left:1492px;top:1195px;width:186.8px;height:1px;background:#e2e4e7;"></div>
<div class="a" style="left:1507.2px;top:1208.84px;width:88px;height:29px;background:#ececec;border-radius:5px;"></div>
<span class="t" style="left:1517.5px;top:1215px;font-size:15.2px;color:#222;-webkit-text-stroke:0.44px #222;letter-spacing:0.100px;">Diagnosis</span>
<div class="a" style="left:1600.6px;top:1208.84px;width:63.5px;height:29px;background:#ececec;border-radius:5px;"></div>
<span class="t" style="left:1610.6px;top:1215px;font-size:15.2px;color:#222;-webkit-text-stroke:0.44px #222;letter-spacing:0.373px;">Traffic</span>
<div class="a" style="left:1492px;top:1278px;width:186.8px;height:1px;background:#e2e4e7;"></div>
<div class="a" style="left:1507.2px;top:1292.41px;width:88px;height:29px;background:#ececec;border-radius:5px;"></div>
<span class="t" style="left:1517.5px;top:1299px;font-size:15.2px;color:#222;-webkit-text-stroke:0.44px #222;letter-spacing:0.100px;">Diagnosis</span>
<div class="a" style="left:1600.6px;top:1292.41px;width:63.5px;height:29px;background:#ececec;border-radius:5px;"></div>
<span class="t" style="left:1610.6px;top:1299px;font-size:15.2px;color:#222;-webkit-text-stroke:0.44px #222;letter-spacing:0.373px;">Traffic</span>
<div class="a" style="left:1492px;top:1362px;width:186.8px;height:1px;background:#e2e4e7;"></div>
<div class="a" style="left:1507.2px;top:1375.98px;width:88px;height:29px;background:#ececec;border-radius:5px;"></div>
<span class="t" style="left:1517.5px;top:1383px;font-size:15.2px;color:#b4b4b4;-webkit-text-stroke:0.18px #b4b4b4;letter-spacing:0.100px;">Diagnosis</span>
<div class="a" style="left:1600.6px;top:1375.98px;width:63.5px;height:29px;background:#ececec;border-radius:5px;"></div>
<span class="t" style="left:1610.6px;top:1383px;font-size:15.2px;color:#b4b4b4;-webkit-text-stroke:0.18px #b4b4b4;letter-spacing:0.373px;">Traffic</span>
<div class="a" style="left:1492px;top:1445px;width:186.8px;height:1px;background:#e2e4e7;"></div>
<div class="a" style="left:1507.2px;top:1459.55px;width:88px;height:29px;background:#ececec;border-radius:5px;"></div>
<span class="t" style="left:1517.5px;top:1466px;font-size:15.2px;color:#b4b4b4;-webkit-text-stroke:0.18px #b4b4b4;letter-spacing:0.100px;">Diagnosis</span>
<div class="a" style="left:1600.6px;top:1459.55px;width:63.5px;height:29px;background:#ececec;border-radius:5px;"></div>
<span class="t" style="left:1610.6px;top:1466px;font-size:15.2px;color:#b4b4b4;-webkit-text-stroke:0.18px #b4b4b4;letter-spacing:0.373px;">Traffic</span>
<div class="a" style="left:1492px;top:1529px;width:186.8px;height:1px;background:#e2e4e7;"></div>
<div class="a" style="left:1507.2px;top:1543.1200000000001px;width:88px;height:29px;background:#ececec;border-radius:5px;"></div>
<span class="t" style="left:1517.5px;top:1550px;font-size:15.2px;color:#b4b4b4;-webkit-text-stroke:0.18px #b4b4b4;letter-spacing:0.100px;">Diagnosis</span>
<div class="a" style="left:1600.6px;top:1543.1200000000001px;width:63.5px;height:29px;background:#ececec;border-radius:5px;"></div>
<span class="t" style="left:1610.6px;top:1550px;font-size:15.2px;color:#111;-webkit-text-stroke:0.61px #111;letter-spacing:0.373px;">Traffic</span>
<div class="a" style="left:430px;top:514px;width:1282px;height:1099px;border:8px solid #f44641;border-radius:11px;"></div>
<div class="a" style="left:446px;top:634px;width:366px;height:58px;border:8px solid #f44641;border-radius:10px;"></div>
<svg class="a" style="left:630px;top:836px" width="192" height="72" viewBox="630 836 192 72"><path d="M643.800 870.400L688.200 846.800Q693.300 844.200 693.300 850V859.400L810.800 870.400Q812.200 870.500 812.200 871.900V876Q812.200 877.400 810.800 877.400L693.300 884.400V893.600Q693.300 899.400 688.200 896.600L643.800 875.200Q639.500 872.800 643.800 870.400Z" fill="#f44641"/></svg>
</div>
</body></html>
